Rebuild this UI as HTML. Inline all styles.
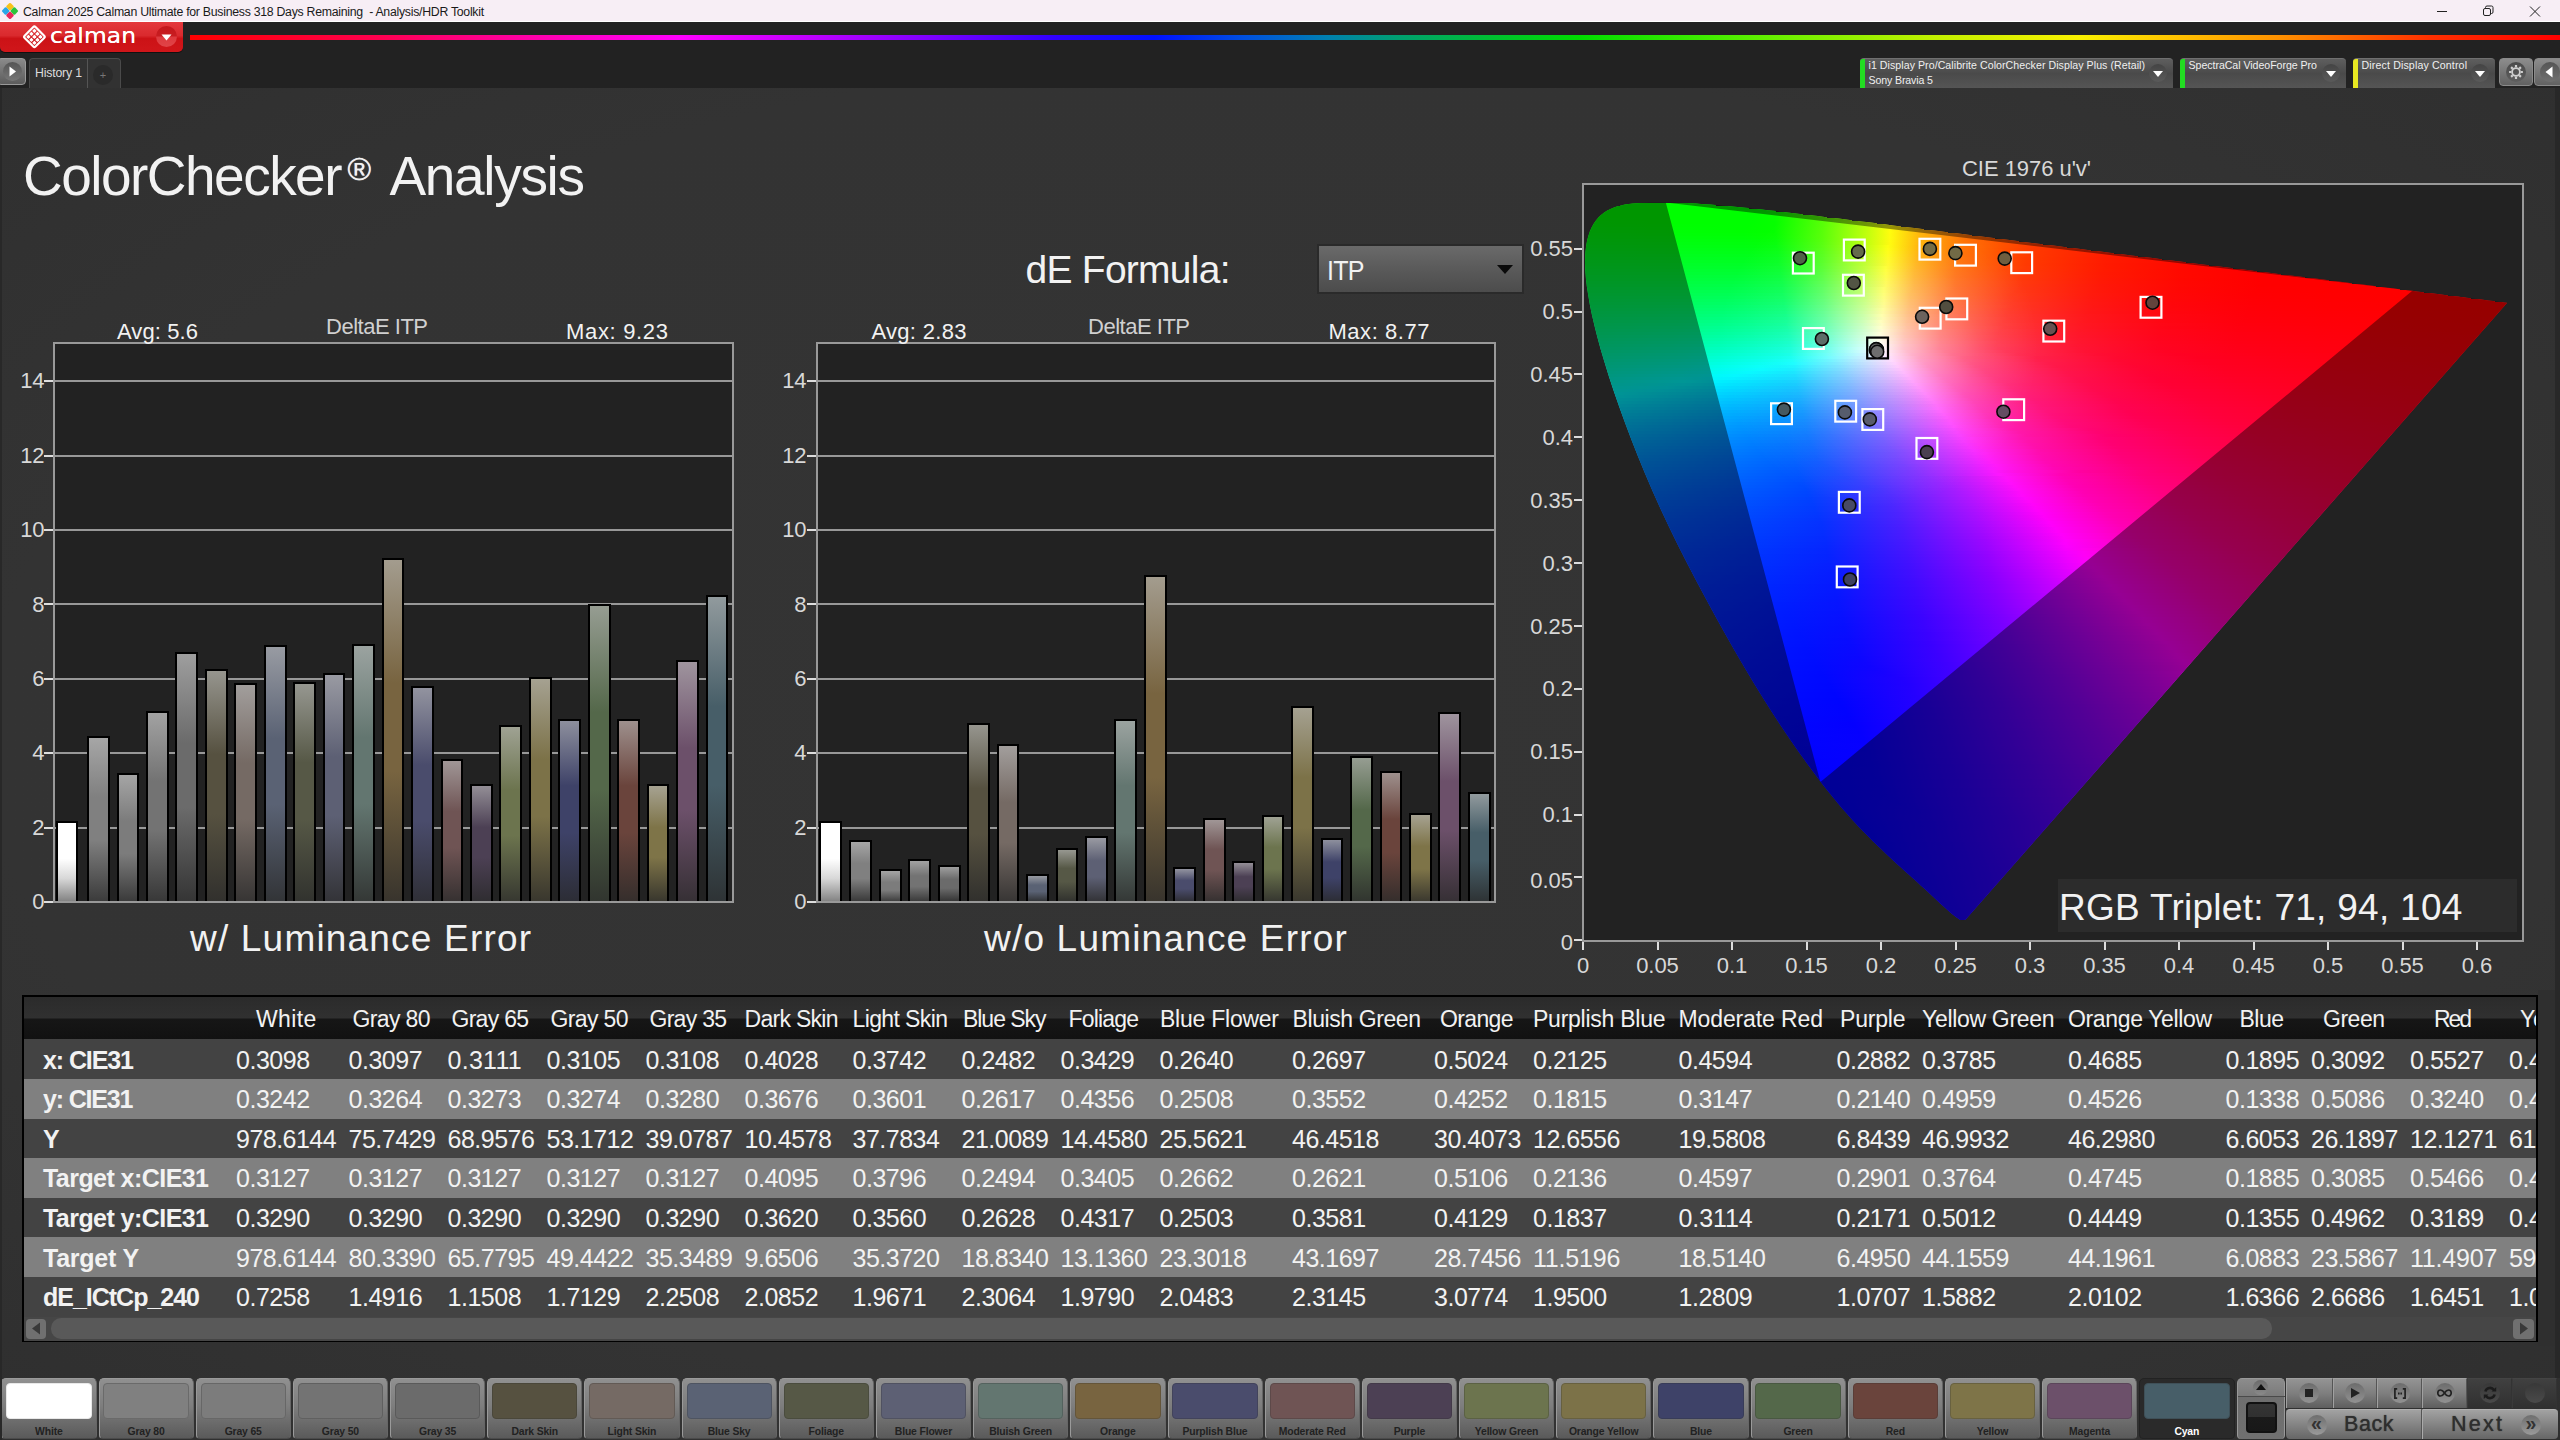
<!DOCTYPE html>
<html><head><meta charset="utf-8"><title>Calman - ColorChecker Analysis</title>
<style>
html,body{margin:0;padding:0;}
body{width:2560px;height:1440px;overflow:hidden;background:#333;position:relative;font-family:"Liberation Sans",sans-serif;}
.t{position:absolute;white-space:pre;}
.a{position:absolute;}
.cie{position:absolute;left:1584px;top:185px;width:938px;height:755px;clip-path:polygon(381.7px 734.6px,380.2px 735.1px,378.2px 735.3px,376.3px 734.9px,374.8px 734.1px,373.4px 733.1px,371.8px 732.0px,370.0px 730.5px,368.0px 728.9px,366.9px 727.9px,365.7px 726.9px,364.4px 725.7px,362.9px 724.5px,361.5px 723.2px,359.9px 721.8px,358.2px 720.3px,356.5px 718.7px,354.7px 717.0px,352.8px 715.2px,350.9px 713.4px,348.8px 711.4px,346.6px 709.4px,344.3px 707.3px,341.9px 705.1px,339.4px 702.8px,336.7px 700.4px,333.9px 697.8px,330.9px 695.1px,327.7px 692.3px,324.4px 689.3px,321.0px 686.2px,317.5px 683.0px,313.8px 679.7px,310.0px 676.2px,306.0px 672.5px,301.9px 668.7px,297.6px 664.6px,293.1px 660.3px,288.4px 655.7px,283.6px 650.8px,278.6px 645.7px,273.5px 640.4px,268.2px 634.7px,262.7px 628.6px,256.9px 621.9px,250.8px 614.6px,244.2px 606.4px,237.1px 597.4px,229.7px 587.5px,221.8px 576.8px,213.7px 565.4px,205.4px 553.4px,196.8px 540.7px,188.0px 527.2px,179.0px 513.1px,169.9px 498.2px,160.5px 482.6px,151.0px 466.3px,141.5px 449.5px,131.9px 432.3px,122.4px 414.7px,112.9px 396.9px,103.5px 378.9px,94.2px 360.8px,85.3px 342.5px,76.7px 324.3px,68.6px 306.3px,61.0px 288.6px,53.9px 271.2px,47.2px 254.2px,40.9px 237.6px,35.1px 221.6px,29.8px 206.3px,24.9px 191.6px,20.6px 177.6px,16.7px 164.5px,13.3px 152.1px,10.4px 140.5px,7.9px 129.7px,5.8px 119.6px,4.2px 110.1px,2.8px 101.3px,1.9px 93.2px,1.3px 85.7px,1.0px 78.7px,1.1px 72.3px,1.5px 66.3px,2.2px 60.6px,3.1px 55.5px,4.4px 50.7px,5.9px 46.3px,7.7px 42.3px,9.8px 38.6px,12.1px 35.3px,14.6px 32.3px,17.3px 29.8px,20.2px 27.5px,23.3px 25.6px,26.5px 23.9px,29.9px 22.5px,33.4px 21.3px,37.1px 20.4px,40.8px 19.6px,44.7px 19.1px,48.6px 18.6px,52.6px 18.2px,56.7px 17.9px,60.9px 17.7px,65.1px 17.6px,69.4px 17.5px,73.6px 17.5px,77.8px 17.5px,82.0px 17.5px,86.3px 17.5px,90.5px 17.6px,94.8px 17.7px,99.2px 17.9px,103.6px 18.1px,108.0px 18.3px,112.5px 18.6px,117.1px 18.9px,121.7px 19.2px,126.4px 19.6px,131.2px 19.9px,136.0px 20.3px,140.9px 20.8px,145.9px 21.2px,151.0px 21.7px,156.2px 22.2px,161.5px 22.8px,166.9px 23.3px,172.4px 23.9px,178.0px 24.5px,183.7px 25.2px,189.6px 25.8px,195.5px 26.5px,201.6px 27.2px,207.8px 27.9px,214.1px 28.7px,220.6px 29.5px,227.1px 30.2px,233.9px 31.1px,240.7px 31.9px,247.7px 32.7px,254.8px 33.6px,262.1px 34.5px,269.6px 35.4px,277.2px 36.4px,284.9px 37.3px,292.8px 38.3px,300.8px 39.3px,309.0px 40.4px,317.4px 41.4px,325.9px 42.5px,334.6px 43.6px,343.4px 44.7px,352.4px 45.8px,361.6px 47.0px,370.9px 48.1px,380.3px 49.3px,389.9px 50.6px,399.6px 51.8px,409.5px 53.0px,419.5px 54.3px,429.7px 55.6px,439.9px 56.9px,450.3px 58.2px,460.8px 59.5px,471.4px 60.8px,482.1px 62.2px,492.9px 63.5px,503.8px 64.9px,514.7px 66.3px,525.7px 67.7px,536.6px 69.1px,547.4px 70.4px,558.2px 71.8px,568.8px 73.1px,579.3px 74.4px,589.8px 75.8px,600.2px 77.1px,610.7px 78.4px,621.1px 79.7px,631.4px 81.0px,641.6px 82.3px,651.6px 83.6px,661.3px 84.8px,670.8px 86.0px,680.1px 87.1px,689.1px 88.3px,698.0px 89.4px,706.7px 90.5px,715.1px 91.5px,723.3px 92.6px,731.3px 93.6px,739.1px 94.6px,746.6px 95.5px,753.8px 96.4px,760.8px 97.3px,767.6px 98.2px,774.1px 99.0px,780.4px 99.8px,786.5px 100.5px,792.4px 101.3px,798.0px 102.0px,803.5px 102.7px,808.8px 103.3px,813.8px 104.0px,818.7px 104.6px,823.5px 105.2px,828.2px 105.8px,832.7px 106.4px,837.1px 106.9px,841.4px 107.5px,845.6px 108.0px,849.6px 108.5px,853.5px 109.0px,857.2px 109.5px,860.9px 109.9px,864.3px 110.4px,867.7px 110.8px,870.9px 111.2px,874.0px 111.6px,877.0px 112.0px,879.9px 112.3px,882.5px 112.7px,885.0px 113.0px,887.4px 113.3px,889.6px 113.6px,891.7px 113.8px,893.7px 114.1px,895.6px 114.3px,897.5px 114.5px,900.9px 115.0px,904.0px 115.4px,906.7px 115.7px,909.1px 116.0px,911.1px 116.3px,913.5px 116.6px,915.7px 116.8px,917.7px 117.1px,919.9px 117.4px,922.2px 117.7px,923.2px 117.8px);}
.cie i{position:absolute;height:3px;display:block}

</style></head><body>
<div class="a" style="left:0;top:88px;width:2560px;height:1352px;background:radial-gradient(ellipse 72% 72% at 50% 48%,#343434 0%,#333 70%,#2f2f2f 100%);"></div>
<div class="a" style="left:0;top:0;width:2560px;height:22px;background:#f7eef5;border-bottom:1px solid #fff;box-sizing:border-box"></div>
<svg class="a" style="left:-0.5px;top:2.3px" width="20" height="18" viewBox="0 0 20 18">
<g transform="translate(10,9)">
<rect x="-3" y="-3" width="6" height="6" rx="1.2" transform="translate(0,-4.3) rotate(45)" fill="#f7c21a"/>
<rect x="-3" y="-3" width="6" height="6" rx="1.2" transform="translate(-4.3,0) rotate(45)" fill="#2aa7e8"/>
<rect x="-3" y="-3" width="6" height="6" rx="1.2" transform="translate(4.3,0) rotate(45)" fill="#2bc43a"/>
<rect x="-3" y="-3" width="6" height="6" rx="1.2" transform="translate(0,4.3) rotate(45)" fill="#e8265a"/>
</g></svg>
<svg class="a" style="left:2420px;top:0" width="140" height="22" viewBox="0 0 140 22" fill="none" stroke="#222" stroke-width="1">
<path d="M17 11.5h10"/>
<rect x="63.5" y="8.5" width="7" height="7" rx="1.5"/><path d="M65.5 8.5v-1a1.5 1.5 0 0 1 1.5 -1.5h4.5a1.5 1.5 0 0 1 1.5 1.5v4.5a1.5 1.5 0 0 1 -1.5 1.5h-1"/>
<path d="M110 6.5l10 10M120 6.5l-10 10"/></svg>
<div class="a" style="left:0;top:22px;width:2560px;height:66px;background:#222;"></div>
<div class="a" style="left:190px;top:35px;width:2370px;height:5px;background:linear-gradient(90deg,#f00 0%,#ff0050 8%,#ff00c0 16%,#f0f 20.7%,#c000ff 26%,#8000ff 31%,#3000ff 36.5%,#0010ff 40.7%,#0050e0 44.5%,#0080b0 48%,#00a070 51%,#00c030 55%,#00dc00 58.6%,#40ec00 64%,#70f000 67.5%,#c0f000 73.5%,#f8f000 79.7%,#ffc000 84%,#ff9000 88.2%,#ff3000 94.5%,#f00 100%);"></div>
<div class="a" style="left:0;top:22.4px;width:183px;height:29.6px;border-radius:0 0 5px 5px;background:linear-gradient(#e4383c 0%,#da2a2e 45%,#cc1216 55%,#d0161a 100%);box-shadow:0 1px 0 #111;"></div>
<svg class="a" style="left:20px;top:24px" width="30" height="26" viewBox="0 0 30 26"><g transform="translate(14.4,12.8) rotate(45)"><rect x="-7.7" y="-7.7" width="15.4" height="15.4" rx="1.6" fill="none" stroke="#fff" stroke-width="2.2"/><rect x="-5.80" y="-5.80" width="3.1" height="3.1" rx="0.5" fill="#fff"/><rect x="-5.80" y="-1.55" width="3.1" height="3.1" rx="0.5" fill="#fff"/><rect x="-5.80" y="2.70" width="3.1" height="3.1" rx="0.5" fill="#fff"/><rect x="-1.55" y="-5.80" width="3.1" height="3.1" rx="0.5" fill="#fff"/><rect x="-1.55" y="-1.55" width="3.1" height="3.1" rx="0.5" fill="#fff"/><rect x="-1.55" y="2.70" width="3.1" height="3.1" rx="0.5" fill="#fff"/><rect x="2.70" y="-5.80" width="3.1" height="3.1" rx="0.5" fill="#fff"/><rect x="2.70" y="-1.55" width="3.1" height="3.1" rx="0.5" fill="#fff"/><rect x="2.70" y="2.70" width="3.1" height="3.1" rx="0.5" fill="#fff"/></g></svg>
<div class="a" style="left:156px;top:26px;width:21px;height:21px;border-radius:50%;background:linear-gradient(#c4181c 0%,#c81c20 48%,#de3a3e 52%,#e04448 100%);"></div>
<svg class="a" style="left:161px;top:34px" width="11" height="7"><path d="M0.5 0.5h10l-5 6z" fill="#fff"/></svg>
<div class="a" style="left:-3px;top:58px;width:29px;height:27px;border-radius:4px;background:linear-gradient(#8a8a8a,#5c5c5c);border:1px solid #999;box-sizing:border-box"></div>
<div class="a" style="left:3px;top:62px;width:19px;height:19px;border-radius:50%;background:linear-gradient(#555,#777);"></div>
<svg class="a" style="left:9px;top:66px" width="8" height="11"><path d="M0.5 0.5v10l6.5-5z" fill="#fff"/></svg>
<div class="a" style="left:29px;top:58px;width:92px;height:30px;border-radius:4px 4px 0 0;background:#323232;border:1px solid #4a4a4a;border-bottom:none;box-sizing:border-box"></div>
<div class="a" style="left:87px;top:59px;width:1px;height:29px;background:#555"></div>
<div class="a" style="left:93px;top:65px;width:20px;height:20px;border-radius:50%;background:#2a2a2a;"></div>
<div class="a" style="left:1860px;top:58px;width:313px;height:30px;border-radius:4px 4px 0 0;background:linear-gradient(#5e5e5e,#4a4a4a 50%,#555 100%);border-top:1px solid #707070;box-sizing:border-box"></div>
<div class="a" style="left:1860px;top:59px;width:5px;height:29px;background:#22dd22;border-radius:3px 0 0 0"></div>
<div class="a" style="left:2149px;top:64px;width:18px;height:18px;border-radius:50%;background:linear-gradient(#444,#5a5a5a);"></div>
<svg class="a" style="left:2153px;top:71px" width="10" height="6"><path d="M0 0h10l-5 6z" fill="#fff"/></svg>
<div class="a" style="left:2180px;top:58px;width:166px;height:30px;border-radius:4px 4px 0 0;background:linear-gradient(#5e5e5e,#4a4a4a 50%,#555 100%);border-top:1px solid #707070;box-sizing:border-box"></div>
<div class="a" style="left:2180px;top:59px;width:5px;height:29px;background:#22dd22;border-radius:3px 0 0 0"></div>
<div class="a" style="left:2322px;top:64px;width:18px;height:18px;border-radius:50%;background:linear-gradient(#444,#5a5a5a);"></div>
<svg class="a" style="left:2326px;top:71px" width="10" height="6"><path d="M0 0h10l-5 6z" fill="#fff"/></svg>
<div class="a" style="left:2353px;top:58px;width:142px;height:30px;border-radius:4px 4px 0 0;background:linear-gradient(#5e5e5e,#4a4a4a 50%,#555 100%);border-top:1px solid #707070;box-sizing:border-box"></div>
<div class="a" style="left:2353px;top:59px;width:5px;height:29px;background:#e8e822;border-radius:3px 0 0 0"></div>
<div class="a" style="left:2471px;top:64px;width:18px;height:18px;border-radius:50%;background:linear-gradient(#444,#5a5a5a);"></div>
<svg class="a" style="left:2475px;top:71px" width="10" height="6"><path d="M0 0h10l-5 6z" fill="#fff"/></svg>
<div class="a" style="left:2499px;top:58px;width:34px;height:28px;border-radius:4px;background:linear-gradient(#8c8c8c,#626262);border:1px solid #8a8a8a;box-sizing:border-box"></div>
<div class="a" style="left:2506px;top:62px;width:20px;height:20px;border-radius:50%;background:linear-gradient(#4a4a4a,#5e5e5e);"></div>
<svg class="a" style="left:2507px;top:63px" width="18" height="18" viewBox="-9 -9 18 18"><g fill="none" stroke="#cfcfcf"><circle r="3.9" stroke-width="1.8"/><g stroke-width="2.2"><path d="M0 -6.9v2.2M0 6.9v-2.2M-6.9 0h2.2M6.9 0h-2.2M-4.9 -4.9l1.6 1.6M4.9 4.9l-1.6 -1.6M-4.9 4.9l1.6 -1.6M4.9 -4.9l-1.6 1.6"/></g></g></svg>
<div class="a" style="left:2534px;top:58px;width:30px;height:28px;border-radius:4px;background:linear-gradient(#8c8c8c,#626262);border:1px solid #8a8a8a;box-sizing:border-box"></div>
<div class="a" style="left:2540px;top:62px;width:20px;height:20px;border-radius:50%;background:linear-gradient(#555,#707070);"></div>
<svg class="a" style="left:2545px;top:66px" width="8" height="12"><path d="M7.5 0.5v11l-7-5.5z" fill="#fff"/></svg>
<div class="a" style="left:1317.3px;top:243.6px;width:207px;height:50px;box-sizing:border-box;border:2px solid #2a2a2a;background:linear-gradient(#6a6a6a,#5a5a5a 50%,#4c4c4c);"></div>
<svg class="a" style="left:1497px;top:265px" width="16" height="9"><path d="M0 0h16l-8 9z" fill="#0a0a0a"/></svg>
<div class="a" style="left:53px;top:342px;width:681px;height:561px;background:#222;"></div>
<div class="a" style="left:55px;top:826.6px;width:677px;height:2px;background:#989898;"></div><div class="a" style="left:55px;top:752.2px;width:677px;height:2px;background:#989898;"></div><div class="a" style="left:55px;top:677.8px;width:677px;height:2px;background:#989898;"></div><div class="a" style="left:55px;top:603.4px;width:677px;height:2px;background:#989898;"></div><div class="a" style="left:55px;top:529.0px;width:677px;height:2px;background:#989898;"></div><div class="a" style="left:55px;top:454.6px;width:677px;height:2px;background:#989898;"></div><div class="a" style="left:55px;top:380.2px;width:677px;height:2px;background:#989898;"></div>
<div class="a" style="left:55.60px;top:821.0px;width:22.8px;height:80.5px;box-sizing:border-box;border:2px solid #000;border-bottom:none;background:linear-gradient(#fff 0%,#fff 45%,#d8d8d8 70%,#808080 100%);"></div><div class="a" style="left:87.10px;top:735.5px;width:22.8px;height:166.0px;box-sizing:border-box;border:2px solid #000;border-bottom:none;background:linear-gradient(#a6a6a6 0%,#808080 36%,#808080 62%,#3a3a3a 100%);"></div><div class="a" style="left:116.55px;top:773.0px;width:22.8px;height:128.5px;box-sizing:border-box;border:2px solid #000;border-bottom:none;background:linear-gradient(#a5a5a5 0%,#7c7c7c 36%,#7c7c7c 62%,#393939 100%);"></div><div class="a" style="left:146.00px;top:710.5px;width:22.8px;height:191.0px;box-sizing:border-box;border:2px solid #000;border-bottom:none;background:linear-gradient(#a2a2a2 0%,#737373 36%,#737373 62%,#373737 100%);"></div><div class="a" style="left:175.45px;top:652.1px;width:22.8px;height:249.4px;box-sizing:border-box;border:2px solid #000;border-bottom:none;background:linear-gradient(#9e9e9e 0%,#6b6b6b 36%,#6b6b6b 62%,#353535 100%);"></div><div class="a" style="left:204.90px;top:668.5px;width:22.8px;height:233.0px;box-sizing:border-box;border:2px solid #000;border-bottom:none;background:linear-gradient(#96958e 0%,#565140 36%,#565140 62%,#31302d 100%);"></div><div class="a" style="left:234.35px;top:683.4px;width:22.8px;height:218.1px;box-sizing:border-box;border:2px solid #000;border-bottom:none;background:linear-gradient(#a29e9c 0%,#756a64 36%,#756a64 62%,#373534 100%);"></div><div class="a" style="left:263.80px;top:645.4px;width:22.8px;height:256.1px;box-sizing:border-box;border:2px solid #000;border-bottom:none;background:linear-gradient(#989ba2 0%,#5a6274 36%,#5a6274 62%,#323437 100%);"></div><div class="a" style="left:293.25px;top:681.5px;width:22.8px;height:220.0px;box-sizing:border-box;border:2px solid #000;border-bottom:none;background:linear-gradient(#969790 0%,#565846 36%,#565846 62%,#31322e 100%);"></div><div class="a" style="left:322.70px;top:673.0px;width:22.8px;height:228.5px;box-sizing:border-box;border:2px solid #000;border-bottom:none;background:linear-gradient(#999aa2 0%,#5d6074 36%,#5d6074 62%,#333337 100%);"></div><div class="a" style="left:352.15px;top:643.6px;width:22.8px;height:257.9px;box-sizing:border-box;border:2px solid #000;border-bottom:none;background:linear-gradient(#9ba3a0 0%,#637670 36%,#637670 62%,#343836 100%);"></div><div class="a" style="left:381.60px;top:557.6px;width:22.8px;height:343.9px;box-sizing:border-box;border:2px solid #000;border-bottom:none;background:linear-gradient(#a39c8e 0%,#786440 36%,#786440 62%,#38342d 100%);"></div><div class="a" style="left:411.05px;top:686.0px;width:22.8px;height:215.5px;box-sizing:border-box;border:2px solid #000;border-bottom:none;background:linear-gradient(#92939f 0%,#4a4c6c 36%,#4a4c6c 62%,#2f2f36 100%);"></div><div class="a" style="left:440.50px;top:758.9px;width:22.8px;height:142.6px;box-sizing:border-box;border:2px solid #000;border-bottom:none;background:linear-gradient(#a09696 0%,#6f5454 36%,#6f5454 62%,#363131 100%);"></div><div class="a" style="left:469.95px;top:783.8px;width:22.8px;height:117.7px;box-sizing:border-box;border:2px solid #000;border-bottom:none;background:linear-gradient(#938e96 0%,#4c4054 36%,#4c4054 62%,#2f2d31 100%);"></div><div class="a" style="left:499.40px;top:725.0px;width:22.8px;height:176.5px;box-sizing:border-box;border:2px solid #000;border-bottom:none;background:linear-gradient(#9fa293 0%,#6c744e 36%,#6c744e 62%,#363730 100%);"></div><div class="a" style="left:528.85px;top:676.7px;width:22.8px;height:224.8px;box-sizing:border-box;border:2px solid #000;border-bottom:none;background:linear-gradient(#a5a191 0%,#7c7248 36%,#7c7248 62%,#39372e 100%);"></div><div class="a" style="left:558.30px;top:719.1px;width:22.8px;height:182.4px;box-sizing:border-box;border:2px solid #000;border-bottom:none;background:linear-gradient(#8d8f9d 0%,#3e4268 36%,#3e4268 62%,#2c2d35 100%);"></div><div class="a" style="left:587.75px;top:603.8px;width:22.8px;height:297.7px;box-sizing:border-box;border:2px solid #000;border-bottom:none;background:linear-gradient(#969d92 0%,#54684a 36%,#54684a 62%,#31352f 100%);"></div><div class="a" style="left:617.20px;top:719.1px;width:22.8px;height:182.4px;box-sizing:border-box;border:2px solid #000;border-bottom:none;background:linear-gradient(#9e908d 0%,#6a443c 36%,#6a443c 62%,#352e2c 100%);"></div><div class="a" style="left:646.65px;top:783.8px;width:22.8px;height:117.7px;box-sizing:border-box;border:2px solid #000;border-bottom:none;background:linear-gradient(#a6a291 0%,#7e7448 36%,#7e7448 62%,#39372e 100%);"></div><div class="a" style="left:676.10px;top:660.3px;width:22.8px;height:241.2px;box-sizing:border-box;border:2px solid #000;border-bottom:none;background:linear-gradient(#9f949e 0%,#6c506a 36%,#6c506a 62%,#363035 100%);"></div><div class="a" style="left:705.55px;top:595.2px;width:22.8px;height:306.3px;box-sizing:border-box;border:2px solid #000;border-bottom:none;background:linear-gradient(#919a9d 0%,#475e68 36%,#475e68 62%,#2e3335 100%);"></div>
<div class="a" style="left:53px;top:342px;width:681px;height:561px;box-sizing:border-box;border:2px solid #999;"></div>
<div class="a" style="left:44px;top:901.0px;width:9px;height:2px;background:#ddd;"></div><div class="a" style="left:44px;top:826.6px;width:9px;height:2px;background:#ddd;"></div><div class="a" style="left:44px;top:752.2px;width:9px;height:2px;background:#ddd;"></div><div class="a" style="left:44px;top:677.8px;width:9px;height:2px;background:#ddd;"></div><div class="a" style="left:44px;top:603.4px;width:9px;height:2px;background:#ddd;"></div><div class="a" style="left:44px;top:529.0px;width:9px;height:2px;background:#ddd;"></div><div class="a" style="left:44px;top:454.6px;width:9px;height:2px;background:#ddd;"></div><div class="a" style="left:44px;top:380.2px;width:9px;height:2px;background:#ddd;"></div>
<div class="a" style="left:816px;top:342px;width:680px;height:561px;background:#222;"></div>
<div class="a" style="left:818px;top:826.6px;width:676px;height:2px;background:#989898;"></div><div class="a" style="left:818px;top:752.2px;width:676px;height:2px;background:#989898;"></div><div class="a" style="left:818px;top:677.8px;width:676px;height:2px;background:#989898;"></div><div class="a" style="left:818px;top:603.4px;width:676px;height:2px;background:#989898;"></div><div class="a" style="left:818px;top:529.0px;width:676px;height:2px;background:#989898;"></div><div class="a" style="left:818px;top:454.6px;width:676px;height:2px;background:#989898;"></div><div class="a" style="left:818px;top:380.2px;width:676px;height:2px;background:#989898;"></div>
<div class="a" style="left:818.75px;top:821.0px;width:22.8px;height:80.5px;box-sizing:border-box;border:2px solid #000;border-bottom:none;background:linear-gradient(#fff 0%,#fff 45%,#d8d8d8 70%,#808080 100%);"></div><div class="a" style="left:849.40px;top:840.4px;width:22.8px;height:61.1px;box-sizing:border-box;border:2px solid #000;border-bottom:none;background:linear-gradient(#a6a6a6 0%,#808080 36%,#808080 62%,#3a3a3a 100%);"></div><div class="a" style="left:878.85px;top:869.0px;width:22.8px;height:32.5px;box-sizing:border-box;border:2px solid #000;border-bottom:none;background:linear-gradient(#a5a5a5 0%,#7c7c7c 36%,#7c7c7c 62%,#393939 100%);"></div><div class="a" style="left:908.30px;top:859.0px;width:22.8px;height:42.5px;box-sizing:border-box;border:2px solid #000;border-bottom:none;background:linear-gradient(#a2a2a2 0%,#737373 36%,#737373 62%,#373737 100%);"></div><div class="a" style="left:937.75px;top:864.9px;width:22.8px;height:36.6px;box-sizing:border-box;border:2px solid #000;border-bottom:none;background:linear-gradient(#9e9e9e 0%,#6b6b6b 36%,#6b6b6b 62%,#353535 100%);"></div><div class="a" style="left:967.20px;top:722.8px;width:22.8px;height:178.7px;box-sizing:border-box;border:2px solid #000;border-bottom:none;background:linear-gradient(#96958e 0%,#565140 36%,#565140 62%,#31302d 100%);"></div><div class="a" style="left:996.65px;top:744.0px;width:22.8px;height:157.5px;box-sizing:border-box;border:2px solid #000;border-bottom:none;background:linear-gradient(#a29e9c 0%,#756a64 36%,#756a64 62%,#373534 100%);"></div><div class="a" style="left:1026.10px;top:874.2px;width:22.8px;height:27.3px;box-sizing:border-box;border:2px solid #000;border-bottom:none;background:linear-gradient(#989ba2 0%,#5a6274 36%,#5a6274 62%,#323437 100%);"></div><div class="a" style="left:1055.55px;top:848.2px;width:22.8px;height:53.3px;box-sizing:border-box;border:2px solid #000;border-bottom:none;background:linear-gradient(#969790 0%,#565846 36%,#565846 62%,#31322e 100%);"></div><div class="a" style="left:1085.00px;top:835.9px;width:22.8px;height:65.6px;box-sizing:border-box;border:2px solid #000;border-bottom:none;background:linear-gradient(#999aa2 0%,#5d6074 36%,#5d6074 62%,#333337 100%);"></div><div class="a" style="left:1114.45px;top:718.7px;width:22.8px;height:182.8px;box-sizing:border-box;border:2px solid #000;border-bottom:none;background:linear-gradient(#9ba3a0 0%,#637670 36%,#637670 62%,#343836 100%);"></div><div class="a" style="left:1143.90px;top:574.8px;width:22.8px;height:326.7px;box-sizing:border-box;border:2px solid #000;border-bottom:none;background:linear-gradient(#a39c8e 0%,#786440 36%,#786440 62%,#38342d 100%);"></div><div class="a" style="left:1173.35px;top:867.1px;width:22.8px;height:34.4px;box-sizing:border-box;border:2px solid #000;border-bottom:none;background:linear-gradient(#92939f 0%,#4a4c6c 36%,#4a4c6c 62%,#2f2f36 100%);"></div><div class="a" style="left:1202.80px;top:818.4px;width:22.8px;height:83.1px;box-sizing:border-box;border:2px solid #000;border-bottom:none;background:linear-gradient(#a09696 0%,#6f5454 36%,#6f5454 62%,#363131 100%);"></div><div class="a" style="left:1232.25px;top:860.8px;width:22.8px;height:40.7px;box-sizing:border-box;border:2px solid #000;border-bottom:none;background:linear-gradient(#938e96 0%,#4c4054 36%,#4c4054 62%,#2f2d31 100%);"></div><div class="a" style="left:1261.70px;top:815.1px;width:22.8px;height:86.4px;box-sizing:border-box;border:2px solid #000;border-bottom:none;background:linear-gradient(#9fa293 0%,#6c744e 36%,#6c744e 62%,#363730 100%);"></div><div class="a" style="left:1291.15px;top:705.7px;width:22.8px;height:195.8px;box-sizing:border-box;border:2px solid #000;border-bottom:none;background:linear-gradient(#a5a191 0%,#7c7248 36%,#7c7248 62%,#39372e 100%);"></div><div class="a" style="left:1320.60px;top:838.1px;width:22.8px;height:63.4px;box-sizing:border-box;border:2px solid #000;border-bottom:none;background:linear-gradient(#8d8f9d 0%,#3e4268 36%,#3e4268 62%,#2c2d35 100%);"></div><div class="a" style="left:1350.05px;top:756.3px;width:22.8px;height:145.2px;box-sizing:border-box;border:2px solid #000;border-bottom:none;background:linear-gradient(#969d92 0%,#54684a 36%,#54684a 62%,#31352f 100%);"></div><div class="a" style="left:1379.50px;top:770.8px;width:22.8px;height:130.7px;box-sizing:border-box;border:2px solid #000;border-bottom:none;background:linear-gradient(#9e908d 0%,#6a443c 36%,#6a443c 62%,#352e2c 100%);"></div><div class="a" style="left:1408.95px;top:812.5px;width:22.8px;height:89.0px;box-sizing:border-box;border:2px solid #000;border-bottom:none;background:linear-gradient(#a6a291 0%,#7e7448 36%,#7e7448 62%,#39372e 100%);"></div><div class="a" style="left:1438.40px;top:712.4px;width:22.8px;height:189.1px;box-sizing:border-box;border:2px solid #000;border-bottom:none;background:linear-gradient(#9f949e 0%,#6c506a 36%,#6c506a 62%,#363035 100%);"></div><div class="a" style="left:1467.85px;top:791.6px;width:22.8px;height:109.9px;box-sizing:border-box;border:2px solid #000;border-bottom:none;background:linear-gradient(#919a9d 0%,#475e68 36%,#475e68 62%,#2e3335 100%);"></div>
<div class="a" style="left:816px;top:342px;width:680px;height:561px;box-sizing:border-box;border:2px solid #999;"></div>
<div class="a" style="left:807px;top:901.0px;width:9px;height:2px;background:#ddd;"></div><div class="a" style="left:807px;top:826.6px;width:9px;height:2px;background:#ddd;"></div><div class="a" style="left:807px;top:752.2px;width:9px;height:2px;background:#ddd;"></div><div class="a" style="left:807px;top:677.8px;width:9px;height:2px;background:#ddd;"></div><div class="a" style="left:807px;top:603.4px;width:9px;height:2px;background:#ddd;"></div><div class="a" style="left:807px;top:529.0px;width:9px;height:2px;background:#ddd;"></div><div class="a" style="left:807px;top:454.6px;width:9px;height:2px;background:#ddd;"></div><div class="a" style="left:807px;top:380.2px;width:9px;height:2px;background:#ddd;"></div>
<div class="a" style="left:1582px;top:183px;width:942px;height:759px;background:#222;"></div>
<div class="cie"><i style="left:36px;top:18px;width:96px;background:linear-gradient(90deg,#00ff00 0px,#00ff00 80px,#00ff00 96px)"></i><i style="left:24px;top:21px;width:141px;background:linear-gradient(90deg,#00ff00 0px,#00ff00 80px,#00ff00 140px)"></i><i style="left:17px;top:24px;width:175px;background:linear-gradient(90deg,#00ff00 0px,#00ff00 80px,#00ff00 160px,#0cff00 176px)"></i><i style="left:13px;top:27px;width:206px;background:linear-gradient(90deg,#00ff00 0px,#00ff00 80px,#00ff00 160px,#0bff00 180px,#30ff00 206px)"></i><i style="left:9px;top:30px;width:234px;background:linear-gradient(90deg,#00ff01 0px,#00ff00 80px,#00ff00 160px,#08ff00 182px,#55ff00 230px,#5dff00 234px)"></i><i style="left:7px;top:33px;width:261px;background:linear-gradient(90deg,#00ff03 0px,#00ff00 80px,#00ff00 160px,#07ff00 184px,#54ff00 232px,#96ff00 262px)"></i><i style="left:5px;top:36px;width:288px;background:linear-gradient(90deg,#00ff05 0px,#00ff00 80px,#00ff00 160px,#06ff00 186px,#53ff00 234px,#c4ff00 282px,#d5ff00 288px)"></i><i style="left:3px;top:39px;width:314px;background:linear-gradient(90deg,#00ff07 0px,#00ff02 80px,#00ff00 160px,#06ff00 188px,#53ff00 236px,#c5ff00 284px,#fffd00 304px,#ffe000 314px)"></i><i style="left:1px;top:42px;width:339px;background:linear-gradient(90deg,#00ff0a 0px,#00ff04 80px,#00ff00 160px,#06ff00 190px,#54ff00 238px,#c7ff00 286px,#fffb00 306px,#ffad00 338px)"></i><i style="left:0px;top:45px;width:364px;background:linear-gradient(90deg,#00ff0c 0px,#00ff07 80px,#00ff01 160px,#04ff00 190px,#4dff00 236px,#bfff00 284px,#fffd00 306px,#ffb300 336px,#ff8600 364px)"></i><i style="left:0px;top:48px;width:388px;background:linear-gradient(90deg,#00ff0f 0px,#00ff09 80px,#00ff03 160px,#06ff01 192px,#51ff00 238px,#c5ff00 286px,#fffc00 306px,#ffb200 336px,#ff6f00 382px,#ff6900 388px)"></i><i style="left:0px;top:51px;width:411px;background:linear-gradient(90deg,#00ff11 0px,#00ff0c 80px,#00ff06 160px,#06ff03 192px,#51ff00 238px,#bfff00 284px,#fffc00 306px,#ffb100 336px,#ff6f00 382px,#ff5400 412px)"></i><i style="left:0px;top:54px;width:435px;background:linear-gradient(90deg,#00ff14 0px,#00ff0f 80px,#00ff09 160px,#05ff06 192px,#50ff02 238px,#c0ff00 284px,#fffb00 306px,#ffb000 336px,#ff6e00 382px,#ff4300 436px)"></i><i style="left:0px;top:57px;width:459px;background:linear-gradient(90deg,#00ff17 0px,#00ff12 80px,#00ff0c 160px,#05ff09 192px,#50ff05 238px,#c0ff00 284px,#fffa00 306px,#ffaf00 336px,#ff6d00 382px,#ff3800 454px,#ff3600 458px)"></i><i style="left:0px;top:60px;width:483px;background:linear-gradient(90deg,#00ff1a 0px,#00ff15 80px,#00ff0f 160px,#04ff0d 192px,#4cff08 236px,#bbff04 282px,#feff01 304px,#ffb200 334px,#ff7100 378px,#ff3b00 448px,#ff2b00 482px)"></i><i style="left:0px;top:63px;width:507px;background:linear-gradient(90deg,#00ff1d 0px,#00ff18 80px,#00ff13 160px,#06ff10 194px,#54ff0c 240px,#c7ff07 286px,#ffff05 304px,#ffb101 334px,#ff7000 378px,#ff3a00 448px,#ff2200 506px)"></i><i style="left:0px;top:66px;width:530px;background:linear-gradient(90deg,#00ff20 0px,#00ff1b 80px,#00ff16 160px,#06ff14 194px,#4fff10 238px,#c1ff0b 284px,#fffe09 304px,#ffb004 334px,#ff6f00 378px,#ff3900 448px,#ff1b00 528px,#ff1a00 530px)"></i><i style="left:0px;top:69px;width:554px;background:linear-gradient(90deg,#00ff23 0px,#00ff1f 80px,#00ff1a 160px,#05ff18 194px,#4fff14 238px,#c2ff10 284px,#fffd0d 304px,#ffaf07 334px,#ff6e02 378px,#ff3900 448px,#ff1a00 528px,#ff1400 554px)"></i><i style="left:0px;top:72px;width:578px;background:linear-gradient(90deg,#00ff26 0px,#00ff22 80px,#00ff1e 160px,#05ff1c 194px,#4fff18 238px,#c2ff14 284px,#fffc12 304px,#ffb30a 332px,#ff7204 374px,#ff3b00 442px,#ff1b00 522px,#ff0e00 578px)"></i><i style="left:0px;top:75px;width:602px;background:linear-gradient(90deg,#00ff29 0px,#00ff26 80px,#00ff22 160px,#04ff20 194px,#4eff1d 238px,#bdff19 282px,#fffb17 304px,#ffb20e 332px,#ff7107 374px,#ff3b01 442px,#ff1b00 522px,#ff0a00 602px)"></i><i style="left:0px;top:78px;width:625px;background:linear-gradient(90deg,#00ff2c 0px,#00ff2a 80px,#00ff26 160px,#04ff24 194px,#4aff22 236px,#b7ff1e 280px,#fffa1c 304px,#ffb112 332px,#ff7009 374px,#ff3a02 442px,#ff1a00 522px,#ff0900 602px,#ff0600 626px)"></i><i style="left:0px;top:81px;width:649px;background:linear-gradient(90deg,#00ff30 0px,#00ff2d 80px,#00ff2a 160px,#06ff29 196px,#52ff26 240px,#c4ff23 284px,#feff22 302px,#ffb016 332px,#ff700c 374px,#ff3a04 442px,#ff1a00 522px,#ff0900 602px,#ff0300 650px)"></i><i style="left:0px;top:84px;width:673px;background:linear-gradient(90deg,#00ff33 0px,#00ff31 80px,#00ff2f 160px,#05ff2d 196px,#4dff2b 238px,#beff29 282px,#ffff28 302px,#ffb31b 330px,#ff710f 372px,#ff3b06 438px,#ff1b01 518px,#ff0900 598px,#ff0000 674px)"></i><i style="left:0px;top:87px;width:697px;background:linear-gradient(90deg,#00ff36 0px,#00ff35 80px,#00ff33 160px,#05ff32 196px,#4dff31 238px,#beff2f 282px,#fffe2e 302px,#ffb21f 330px,#ff7012 372px,#ff3b08 438px,#ff1a02 518px,#ff0900 598px,#ff0000 678px,#ff0000 696px)"></i><i style="left:0px;top:90px;width:721px;background:linear-gradient(90deg,#00ff3a 0px,#00ff39 80px,#00ff38 160px,#04ff37 196px,#4dff36 238px,#bfff35 282px,#fffd34 302px,#ffb123 330px,#ff6f15 372px,#ff3a0a 438px,#ff1a03 518px,#ff0900 598px,#ff0000 678px,#ff0000 720px)"></i><i style="left:0px;top:93px;width:745px;background:linear-gradient(90deg,#00ff3d 0px,#00ff3d 80px,#00ff3c 160px,#04ff3c 196px,#4cff3b 238px,#bfff3b 282px,#fffc3a 302px,#ffb028 330px,#ff6f19 372px,#ff390c 438px,#ff1905 518px,#ff0801 598px,#ff0000 678px,#ff0000 744px)"></i><i style="left:0px;top:96px;width:768px;background:linear-gradient(90deg,#00ff41 0px,#00ff41 80px,#00ff41 160px,#06ff41 198px,#51ff41 240px,#c0ff41 282px,#fffb40 302px,#ffaf2c 330px,#ff6e1c 372px,#ff390e 438px,#ff1906 518px,#ff0802 598px,#ff0000 678px,#ff0000 758px,#ff0000 768px)"></i><i style="left:0px;top:99px;width:792px;background:linear-gradient(90deg,#00ff45 0px,#00ff45 80px,#00ff46 160px,#05ff46 198px,#50ff47 240px,#c0ff47 282px,#fffa46 302px,#ffae31 330px,#ff6d1f 372px,#ff3810 438px,#ff1808 518px,#ff0803 598px,#ff0000 678px,#ff0000 758px,#ff0000 792px)"></i><i style="left:0px;top:102px;width:816px;background:linear-gradient(90deg,#00ff49 0px,#00ff49 80px,#00ff4b 160px,#05ff4c 198px,#4cff4d 238px,#baff4e 280px,#fdff4e 300px,#ffad36 330px,#ff6c23 372px,#ff3713 438px,#ff1809 518px,#ff0704 598px,#ff0001 678px,#ff0000 758px,#ff0000 816px)"></i><i style="left:0px;top:105px;width:840px;background:linear-gradient(90deg,#00ff4c 0px,#00ff4e 80px,#00ff50 160px,#04ff51 198px,#4bff53 238px,#bbff54 280px,#feff56 300px,#ffb13c 328px,#ff7028 368px,#ff3a16 432px,#ff190b 512px,#ff0805 592px,#ff0002 672px,#ff0000 752px,#ff0000 832px,#ff0000 840px)"></i><i style="left:0px;top:108px;width:864px;background:linear-gradient(90deg,#00ff50 0px,#00ff52 80px,#00ff55 160px,#04ff57 198px,#4bff59 238px,#bbff5b 280px,#ffff5d 300px,#ffb443 326px,#ff712c 366px,#ff3c19 428px,#ff1a0d 508px,#ff0807 588px,#ff0003 668px,#ff0001 748px,#ff0000 828px,#ff0000 864px)"></i><i style="left:0px;top:111px;width:887px;background:linear-gradient(90deg,#00ff54 0px,#00ff57 80px,#00ff5a 160px,#06ff5c 200px,#4fff5f 240px,#c2ff63 282px,#fffe64 300px,#ffb348 326px,#ff7130 366px,#ff3b1c 428px,#ff190f 508px,#ff0808 588px,#ff0004 668px,#ff0001 748px,#ff0000 828px,#ff0000 888px)"></i><i style="left:0px;top:114px;width:911px;background:linear-gradient(90deg,#00ff58 0px,#00ff5b 80px,#00ff60 160px,#05ff62 200px,#4fff66 240px,#c2ff6a 282px,#fffd6b 300px,#ffb24e 326px,#ff7034 366px,#ff391e 430px,#ff1811 510px,#ff0709 590px,#ff0005 670px,#ff0002 750px,#ff0000 830px,#ff0000 910px,#ff0000 912px)"></i><i style="left:0px;top:117px;width:929px;background:linear-gradient(90deg,#00ff5c 0px,#00ff60 80px,#00ff65 160px,#05ff68 200px,#4eff6c 240px,#bcff71 280px,#fffc72 300px,#ffb153 326px,#ff7139 364px,#ff3b22 426px,#ff1913 506px,#ff070b 586px,#ff0006 666px,#ff0003 746px,#ff0001 826px,#ff0000 906px,#ff0000 928px)"></i><i style="left:0px;top:120px;width:926px;background:linear-gradient(90deg,#00ff60 0px,#00ff65 80px,#00ff6b 160px,#04ff6f 200px,#4fff73 240px,#beff79 280px,#fffa7a 300px,#ffb059 326px,#ff6e3c 366px,#ff3823 430px,#ff1714 510px,#ff060c 590px,#ff0007 670px,#ff0003 750px,#ff0001 830px,#ff0000 910px,#ff0000 926px)"></i><i style="left:1px;top:123px;width:923px;background:linear-gradient(90deg,#00ff64 0px,#00ff6a 80px,#00ff70 160px,#05ff75 200px,#50ff7a 240px,#c0ff81 280px,#fffe84 298px,#ffb260 324px,#ff7142 362px,#ff3a27 424px,#ff1817 504px,#ff070d 584px,#ff0008 664px,#ff0004 744px,#ff0002 824px,#ff0000 904px,#ff0000 922px)"></i><i style="left:1px;top:126px;width:919px;background:linear-gradient(90deg,#00ff69 0px,#00ff6f 80px,#00ff76 160px,#05ff7b 200px,#4cff81 238px,#bcff88 278px,#fffb8a 298px,#ffaf65 324px,#ff6f45 362px,#ff392a 424px,#ff1718 504px,#ff060f 584px,#ff0009 664px,#ff0005 744px,#ff0003 824px,#ff0001 904px,#ff0000 920px)"></i><i style="left:2px;top:129px;width:916px;background:linear-gradient(90deg,#00ff6d 0px,#00ff74 80px,#00ff7c 160px,#05ff82 200px,#4dff88 238px,#beff91 278px,#ffff95 296px,#ffb16d 322px,#ff704b 360px,#ff3a2e 420px,#ff181b 500px,#ff0711 580px,#ff000a 660px,#ff0006 740px,#ff0003 820px,#ff0001 900px,#ff0001 916px)"></i><i style="left:3px;top:132px;width:913px;background:linear-gradient(90deg,#00ff72 0px,#00ff79 80px,#00ff82 160px,#05ff89 200px,#4fff90 238px,#c1ff99 278px,#fffb9c 296px,#ffaf72 322px,#ff6e4e 360px,#ff3830 422px,#ff171c 502px,#ff0612 582px,#ff000b 662px,#ff0007 742px,#ff0004 822px,#ff0002 902px,#ff0002 912px)"></i><i style="left:3px;top:135px;width:909px;background:linear-gradient(90deg,#00ff76 0px,#00ff7e 80px,#00ff89 160px,#06ff90 200px,#50ff98 238px,#bdffa1 276px,#ffffa7 294px,#ffb17a 320px,#ff6f54 358px,#ff3934 418px,#ff171f 498px,#ff0613 578px,#ff000c 658px,#ff0008 738px,#ff0005 818px,#ff0002 898px,#ff0002 910px)"></i><i style="left:4px;top:138px;width:906px;background:linear-gradient(90deg,#00ff7b 0px,#00ff83 80px,#00ff8f 160px,#04ff96 198px,#4cff9f 236px,#b9ffaa 274px,#fffcae 294px,#ffb382 318px,#ff725b 354px,#ff3c39 412px,#ff1822 492px,#ff0716 572px,#ff000e 652px,#ff0009 732px,#ff0006 812px,#ff0003 892px,#ff0003 906px)"></i><i style="left:5px;top:141px;width:903px;background:linear-gradient(90deg,#00ff7f 0px,#00ff89 80px,#00ff96 160px,#04ff9e 198px,#4effa7 236px,#bcffb3 274px,#feffba 292px,#ffb088 318px,#ff6e5d 356px,#ff383a 416px,#ff1623 496px,#ff0516 576px,#ff000f 656px,#ff000a 736px,#ff0006 816px,#ff0004 896px,#ff0003 902px)"></i><i style="left:6px;top:144px;width:899px;background:linear-gradient(90deg,#00ff84 0px,#00ff8e 80px,#00ff9c 160px,#04ffa5 198px,#4affaf 234px,#b8ffbc 272px,#fffbc1 292px,#ffb290 316px,#ff7165 352px,#ff3b40 410px,#ff1726 490px,#ff0619 570px,#ff0010 650px,#ff000b 730px,#ff0007 810px,#ff0004 890px,#ff0004 900px)"></i><i style="left:6px;top:147px;width:896px;background:linear-gradient(90deg,#00ff89 0px,#00ff94 80px,#00ffa3 160px,#05ffad 198px,#4cffb7 234px,#bbffc5 272px,#ffffcd 290px,#ffb499 314px,#ff726b 350px,#ff3b43 408px,#ff1729 488px,#ff061a 568px,#ff0012 648px,#ff000c 728px,#ff0008 808px,#ff0005 888px,#ff0005 896px)"></i><i style="left:7px;top:150px;width:893px;background:linear-gradient(90deg,#00ff8e 0px,#00ff9a 80px,#00ffaa 160px,#05ffb4 198px,#4dffc0 234px,#bfffcf 272px,#fffbd4 290px,#ffb19e 314px,#ff706f 350px,#ff3a46 408px,#ff162b 488px,#ff051c 568px,#ff0013 648px,#ff000d 728px,#ff0009 808px,#ff0006 888px,#ff0006 892px)"></i><i style="left:8px;top:153px;width:889px;background:linear-gradient(90deg,#00ff93 0px,#00ffa0 80px,#00ffb1 160px,#06ffbc 198px,#4fffc9 234px,#c2ffd9 272px,#ffffe1 288px,#ffb3a8 312px,#ff7175 348px,#ff3b4b 404px,#ff172e 484px,#ff051e 564px,#ff0014 644px,#ff000e 724px,#ff000a 804px,#ff0007 884px,#ff0006 890px)"></i><i style="left:9px;top:156px;width:886px;background:linear-gradient(90deg,#00ff98 0px,#00ffa6 80px,#00ffb9 160px,#04ffc4 196px,#4cffd1 232px,#beffe3 270px,#fffbe8 288px,#ffb0ad 312px,#ff6f79 348px,#ff394d 406px,#ff162f 486px,#ff051f 566px,#ff0015 646px,#ff000f 726px,#ff000a 806px,#ff0007 886px)"></i><i style="left:10px;top:159px;width:882px;background:linear-gradient(90deg,#00ff9d 0px,#00ffac 80px,#00ffc0 160px,#04ffcc 196px,#4effdb 232px,#bbffec 268px,#fffef6 286px,#ffb1b7 310px,#ff6f80 346px,#ff3a52 402px,#ff1632 482px,#ff0521 562px,#ff0017 642px,#ff0010 722px,#ff000b 802px,#ff0008 882px)"></i><i style="left:10px;top:162px;width:879px;background:linear-gradient(90deg,#00ffa2 0px,#00ffb2 80px,#00ffc8 160px,#05ffd5 196px,#4fffe4 232px,#befff7 268px,#fffafd 286px,#ffaebc 310px,#ff6d84 346px,#ff3754 404px,#ff1534 484px,#ff0422 564px,#ff0018 644px,#ff0011 724px,#ff000c 804px,#ff0009 878px)"></i><i style="left:11px;top:165px;width:875px;background:linear-gradient(90deg,#00ffa7 0px,#00ffb8 80px,#00ffd0 160px,#06ffdd 196px,#51ffee 232px,#ccf9ff 272px,#ffedfd 288px,#ffa6be 312px,#ff6683 350px,#ff3254 410px,#ff1234 490px,#ff0323 570px,#ff0018 650px,#ff0011 730px,#ff000d 810px,#ff0009 876px)"></i><i style="left:12px;top:168px;width:872px;background:linear-gradient(90deg,#00ffad 0px,#00ffbf 80px,#00ffd8 160px,#03ffe5 194px,#49fff6 228px,#a8f4ff 262px,#ffe2fd 290px,#ff9abb 316px,#ff5d81 356px,#ff2b50 422px,#ff0e33 502px,#ff0123 582px,#ff0018 662px,#ff0012 742px,#ff000d 822px,#ff000a 872px)"></i><i style="left:13px;top:171px;width:868px;background:linear-gradient(90deg,#00ffb2 0px,#00ffc5 80px,#00ffe0 160px,#04ffef 194px,#4ffdff 230px,#e7ddff 284px,#ffd0f7 294px,#ff8cb5 322px,#ff517a 366px,#ff214a 440px,#ff0a30 520px,#ff0021 600px,#ff0018 680px,#ff0011 760px,#ff000d 840px,#ff000b 868px)"></i><i style="left:14px;top:174px;width:865px;background:linear-gradient(90deg,#00ffb8 0px,#00ffcc 80px,#00ffe8 160px,#05fff8 194px,#58f1ff 234px,#ffccfd 294px,#ff89ba 322px,#ff4f7e 366px,#ff204d 440px,#ff0932 520px,#ff0023 600px,#ff0019 680px,#ff0012 760px,#ff000d 840px,#ff000c 864px)"></i><i style="left:15px;top:177px;width:861px;background:linear-gradient(90deg,#00ffbe 0px,#00ffd3 80px,#00fff1 160px,#05fdff 194px,#60e5ff 238px,#ffc2fd 296px,#ff7fb7 326px,#ff487c 372px,#ff1b4b 450px,#ff0731 530px,#ff0022 610px,#ff0019 690px,#ff0012 770px,#ff000e 850px,#ff000d 862px)"></i><i style="left:16px;top:180px;width:858px;background:linear-gradient(90deg,#00ffc3 0px,#00ffda 80px,#00fff9 160px,#06f3ff 194px,#63dbff 240px,#ffb9fd 298px,#ff79b8 328px,#ff437c 376px,#ff184a 456px,#ff0532 536px,#ff0023 616px,#ff0019 696px,#ff0013 776px,#ff000e 856px,#ff000e 858px)"></i><i style="left:17px;top:183px;width:854px;background:linear-gradient(90deg,#00ffc9 0px,#00ffe1 80px,#00fcff 160px,#04ecff 192px,#5dd4ff 238px,#ffaffd 300px,#ff71b6 332px,#ff3d7a 382px,#ff164a 462px,#ff0432 542px,#ff0023 622px,#ff001a 702px,#ff0013 782px,#ff000f 854px)"></i><i style="left:18px;top:186px;width:850px;background:linear-gradient(90deg,#00ffcf 0px,#00ffe8 80px,#00f9ff 148px,#04e3ff 192px,#5ccbff 238px,#ffa7fd 302px,#ff6cb7 334px,#ff3a7b 384px,#ff144c 464px,#ff0333 544px,#ff0024 624px,#ff001b 704px,#ff0014 784px,#ff0010 850px)"></i><i style="left:19px;top:189px;width:847px;background:linear-gradient(90deg,#00ffd5 0px,#00fff0 80px,#00f8ff 132px,#05dbff 192px,#5fc3ff 240px,#ff9ffd 304px,#ff66b8 336px,#ff377d 386px,#ff134d 466px,#ff0234 546px,#ff0025 626px,#ff001c 706px,#ff0015 786px,#ff0011 846px)"></i><i style="left:20px;top:192px;width:843px;background:linear-gradient(90deg,#00ffdc 0px,#00fff7 80px,#00f3ff 126px,#05d4ff 192px,#62baff 242px,#ff97fc 306px,#ff5fb6 340px,#ff327b 392px,#ff104d 472px,#ff0134 552px,#ff0026 632px,#ff001c 712px,#ff0015 792px,#ff0012 844px)"></i><i style="left:21px;top:195px;width:840px;background:linear-gradient(90deg,#00ffe2 0px,#00ffff 80px,#00dbff 160px,#06ccff 192px,#65b3ff 244px,#ff8ffc 308px,#ff5bb7 342px,#ff2e7a 396px,#ff0e4d 476px,#ff0035 556px,#ff0026 636px,#ff001d 716px,#ff0016 796px,#ff0013 840px)"></i><i style="left:22px;top:198px;width:836px;background:linear-gradient(90deg,#00ffe8 0px,#00f9ff 76px,#00d6ff 156px,#04c6ff 190px,#5baeff 240px,#ff88fc 310px,#ff54b5 346px,#ff2978 402px,#ff0c4d 482px,#ff0035 562px,#ff0027 642px,#ff001d 722px,#ff0016 802px,#ff0014 836px)"></i><i style="left:23px;top:201px;width:832px;background:linear-gradient(90deg,#00ffef 0px,#00f8ff 60px,#00d6ff 140px,#05bfff 190px,#5ea7ff 242px,#ff81fc 312px,#ff50b6 348px,#ff277a 404px,#ff0b4e 484px,#ff0036 564px,#ff0028 644px,#ff001e 724px,#ff0017 804px,#ff0015 832px)"></i><i style="left:24px;top:204px;width:829px;background:linear-gradient(90deg,#00fff6 0px,#00f4ff 52px,#00d3ff 132px,#05b9ff 190px,#61a0ff 244px,#ff7bfb 314px,#ff4cb6 350px,#ff257b 406px,#ff0a4f 486px,#ff0038 566px,#ff0029 646px,#ff001f 726px,#ff0018 806px,#ff0016 828px)"></i><i style="left:25px;top:207px;width:825px;background:linear-gradient(90deg,#00fffd 0px,#00e2ff 80px,#00c0ff 160px,#06b3ff 190px,#6499ff 246px,#ff75fb 316px,#ff46b4 354px,#ff2179 412px,#ff084f 492px,#ff0038 572px,#ff0029 652px,#ff001f 732px,#ff0018 812px,#ff0017 826px)"></i><i style="left:26px;top:210px;width:821px;background:linear-gradient(90deg,#00fbff 0px,#00dcff 80px,#00baff 160px,#06adff 190px,#6393ff 246px,#ff6ffb 318px,#ff42b5 356px,#ff1e79 416px,#ff074f 496px,#ff0038 576px,#ff002a 656px,#ff0020 736px,#ff0019 816px,#ff0018 822px)"></i><i style="left:27px;top:213px;width:818px;background:linear-gradient(90deg,#00f4ff 0px,#00d5ff 80px,#00b4ff 160px,#05a8ff 188px,#5e8fff 244px,#ff69fa 320px,#ff3db3 360px,#ff1a77 422px,#ff054f 502px,#ff0038 582px,#ff002a 662px,#ff0020 742px,#ff0019 818px)"></i><i style="left:28px;top:216px;width:814px;background:linear-gradient(90deg,#00eeff 0px,#00cfff 80px,#00afff 160px,#05a3ff 188px,#6189ff 246px,#ff64fa 322px,#ff3ab4 362px,#ff1879 424px,#ff0450 504px,#ff0039 584px,#ff002b 664px,#ff0021 744px,#ff001a 814px)"></i><i style="left:29px;top:219px;width:810px;background:linear-gradient(90deg,#00e7ff 0px,#00c9ff 80px,#00a9ff 160px,#069dff 188px,#6483ff 248px,#ff5efa 324px,#ff37b5 364px,#ff1678 428px,#ff0351 508px,#ff003a 588px,#ff002b 668px,#ff0021 748px,#ff001c 810px)"></i><i style="left:30px;top:222px;width:807px;background:linear-gradient(90deg,#00e1ff 0px,#00c4ff 80px,#00a4ff 160px,#0698ff 188px,#667eff 250px,#ff5cfe 324px,#ff35b8 364px,#ff167c 426px,#ff0353 506px,#ff003c 586px,#ff002d 666px,#ff0023 746px,#ff001d 806px)"></i><i style="left:31px;top:225px;width:803px;background:linear-gradient(90deg,#00dcff 0px,#00beff 80px,#009fff 160px,#0793ff 188px,#6679ff 250px,#ff57fe 326px,#ff31b6 368px,#ff137b 432px,#ff0153 512px,#ff003c 592px,#ff002d 672px,#ff0023 752px,#ff001e 802px)"></i><i style="left:32px;top:228px;width:799px;background:linear-gradient(90deg,#00d6ff 0px,#00b9ff 80px,#009aff 160px,#058fff 186px,#6176ff 248px,#ff52fd 328px,#ff2eb7 370px,#ff107a 436px,#ff0053 516px,#ff003c 596px,#ff002e 676px,#ff0023 756px,#ff001f 800px)"></i><i style="left:33px;top:231px;width:795px;background:linear-gradient(90deg,#00d1ff 0px,#00b4ff 80px,#0095ff 160px,#068bff 186px,#6471ff 250px,#ff4efd 330px,#ff2bb7 372px,#ff0f7b 438px,#ff0054 518px,#ff003d 598px,#ff002e 678px,#ff0024 758px,#ff0020 796px)"></i><i style="left:34px;top:234px;width:792px;background:linear-gradient(90deg,#00cbff 0px,#00afff 80px,#0091ff 160px,#0686ff 186px,#666cff 252px,#ff49fc 332px,#ff27b6 376px,#ff0c7a 444px,#ff0054 524px,#ff003d 604px,#ff002f 684px,#ff0024 764px,#ff0022 792px)"></i><i style="left:35px;top:237px;width:788px;background:linear-gradient(90deg,#00c6ff 0px,#00aaff 80px,#008cff 160px,#0782ff 186px,#6568ff 252px,#fe47ff 332px,#ff25b6 378px,#ff0b7b 446px,#ff0055 526px,#ff003e 606px,#ff0030 686px,#ff0025 766px,#ff0023 788px)"></i><i style="left:36px;top:240px;width:784px;background:linear-gradient(90deg,#00c1ff 0px,#00a5ff 80px,#0088ff 160px,#087eff 186px,#6864ff 254px,#ff43ff 334px,#ff22b7 380px,#ff097a 450px,#ff0055 530px,#ff003f 610px,#ff0030 690px,#ff0026 770px,#ff0024 784px)"></i><i style="left:38px;top:243px;width:780px;background:linear-gradient(90deg,#00bdff 0px,#00a1ff 80px,#0084ff 160px,#067bff 184px,#6461ff 252px,#f741ff 332px,#ff3af3 342px,#ff1cae 390px,#ff0573 466px,#ff0051 546px,#ff003d 626px,#ff002f 706px,#ff0025 780px)"></i><i style="left:39px;top:246px;width:777px;background:linear-gradient(90deg,#00b8ff 0px,#009dff 80px,#0080ff 160px,#0777ff 184px,#665dff 254px,#f83dff 334px,#ff35ef 346px,#ff18ab 396px,#ff0371 474px,#ff0050 554px,#ff003c 634px,#ff002f 714px,#ff0027 776px)"></i><i style="left:40px;top:249px;width:773px;background:linear-gradient(90deg,#00b3ff 0px,#0098ff 80px,#007cff 160px,#0773ff 184px,#6958ff 256px,#f83aff 336px,#ff30eb 350px,#ff15a7 402px,#ff016f 482px,#ff004f 562px,#ff003c 642px,#ff002f 722px,#ff0028 772px)"></i><i style="left:41px;top:252px;width:769px;background:linear-gradient(90deg,#00afff 0px,#0094ff 80px,#0078ff 160px,#0870ff 184px,#6855ff 256px,#f537ff 336px,#ff31f6 346px,#ff16b0 396px,#ff0275 474px,#ff0054 554px,#ff003f 634px,#ff0031 714px,#ff0029 770px)"></i><i style="left:42px;top:255px;width:765px;background:linear-gradient(90deg,#00abff 0px,#0090ff 80px,#0075ff 160px,#086cff 184px,#6a51ff 258px,#f634ff 338px,#ff2df2 350px,#ff13ac 402px,#ff0073 482px,#ff0053 562px,#ff003e 642px,#ff0031 722px,#ff002b 766px)"></i><i style="left:43px;top:258px;width:762px;background:linear-gradient(90deg,#00a7ff 0px,#008dff 80px,#0071ff 160px,#0969ff 184px,#6d4eff 260px,#f630ff 340px,#ff2af1 352px,#ff11ad 404px,#ff0073 484px,#ff0053 564px,#ff003f 644px,#ff0031 724px,#ff002c 762px)"></i><i style="left:44px;top:261px;width:758px;background:linear-gradient(90deg,#00a3ff 0px,#0089ff 80px,#006eff 160px,#0966ff 184px,#6f4aff 262px,#f72dff 342px,#ff27f1 354px,#ff0fab 408px,#ff0073 488px,#ff0054 568px,#ff0040 648px,#ff0032 728px,#ff002e 758px)"></i><i style="left:46px;top:264px;width:754px;background:linear-gradient(90deg,#009fff 0px,#0085ff 80px,#006bff 160px,#0a63ff 184px,#7147ff 264px,#f82aff 344px,#ff24f1 356px,#ff0dac 410px,#ff0074 490px,#ff0055 570px,#ff0040 650px,#ff0033 730px,#ff002f 754px)"></i><i style="left:47px;top:267px;width:750px;background:linear-gradient(90deg,#009bff 0px,#0082ff 80px,#0068ff 160px,#0b60ff 184px,#7044ff 264px,#f528ff 344px,#ff24f7 354px,#ff0db2 406px,#ff0078 486px,#ff0057 566px,#ff0042 646px,#ff0034 726px,#ff0031 750px)"></i><i style="left:48px;top:270px;width:746px;background:linear-gradient(90deg,#0097ff 0px,#007eff 80px,#0065ff 160px,#0b5dff 184px,#7042ff 264px,#f226ff 344px,#ff21f7 356px,#ff0bb1 410px,#ff0078 490px,#ff0057 570px,#ff0043 650px,#ff0035 730px,#ff0032 746px)"></i><i style="left:49px;top:273px;width:742px;background:linear-gradient(90deg,#0094ff 0px,#007bff 80px,#0062ff 160px,#0c5aff 184px,#6f3fff 264px,#ef24ff 344px,#ff1ffa 356px,#ff0ab3 410px,#ff007a 490px,#ff0059 570px,#ff0044 650px,#ff0036 730px,#ff0034 742px)"></i><i style="left:50px;top:276px;width:739px;background:linear-gradient(90deg,#0090ff 0px,#0078ff 80px,#005fff 160px,#0e56ff 186px,#713cff 266px,#f022ff 346px,#ff1df9 358px,#ff09b4 412px,#ff007a 492px,#ff005a 572px,#ff0045 652px,#ff0036 732px,#ff0035 738px)"></i><i style="left:52px;top:279px;width:735px;background:linear-gradient(90deg,#008dff 0px,#0075ff 80px,#005cff 160px,#1153ff 188px,#7339ff 268px,#f11fff 348px,#ff1af9 360px,#ff07b2 416px,#ff007a 496px,#ff005a 576px,#ff0045 656px,#ff0037 734px)"></i><i style="left:53px;top:282px;width:731px;background:linear-gradient(90deg,#008aff 0px,#0072ff 80px,#0059ff 160px,#154fff 192px,#7835ff 272px,#f51cff 352px,#ff18f8 362px,#ff06b3 418px,#ff007b 498px,#ff005b 578px,#ff0046 658px,#ff0039 730px)"></i><i style="left:54px;top:285px;width:727px;background:linear-gradient(90deg,#0086ff 0px,#006fff 80px,#0056ff 160px,#1a4bff 196px,#7d32ff 276px,#f919ff 356px,#ff10e3 378px,#ff01a0 442px,#ff0071 522px,#ff0055 602px,#ff0042 682px,#ff003a 728px)"></i><i style="left:55px;top:288px;width:723px;background:linear-gradient(90deg,#0083ff 0px,#006cff 80px,#0054ff 160px,#1e48ff 200px,#822fff 280px,#fd16ff 360px,#ff03b3 422px,#ff007c 502px,#ff005c 582px,#ff0047 662px,#ff003c 724px)"></i><i style="left:57px;top:291px;width:719px;background:linear-gradient(90deg,#0080ff 0px,#0069ff 80px,#0051ff 160px,#2543ff 206px,#892bff 286px,#ff13fa 366px,#ff02b4 424px,#ff007d 504px,#ff005d 584px,#ff0048 664px,#ff003d 720px)"></i><i style="left:58px;top:294px;width:715px;background:linear-gradient(90deg,#007dff 0px,#0066ff 80px,#004fff 160px,#2c3fff 212px,#9127ff 292px,#ff11fc 366px,#ff02b6 424px,#ff007f 504px,#ff005e 584px,#ff0049 664px,#ff003f 716px)"></i><i style="left:59px;top:297px;width:711px;background:linear-gradient(90deg,#007aff 0px,#0064ff 80px,#004cff 160px,#313cff 216px,#9524ff 296px,#ff0ffc 368px,#ff01b6 426px,#ff007f 506px,#ff005f 586px,#ff004a 666px,#ff0041 712px)"></i><i style="left:61px;top:300px;width:707px;background:linear-gradient(90deg,#0077ff 0px,#0061ff 80px,#004aff 160px,#3738ff 222px,#9d21ff 302px,#ff0dfb 370px,#ff00b4 430px,#ff007f 510px,#ff005f 590px,#ff004a 670px,#ff0042 708px)"></i><i style="left:62px;top:303px;width:704px;background:linear-gradient(90deg,#0075ff 0px,#005eff 80px,#0048ff 160px,#3e34ff 228px,#a41dff 308px,#ff0cfb 372px,#ff00b5 432px,#ff0080 512px,#ff0060 592px,#ff004b 672px,#ff0044 704px)"></i><i style="left:63px;top:306px;width:700px;background:linear-gradient(90deg,#0072ff 0px,#005cff 80px,#0046ff 160px,#4531ff 234px,#ab1aff 314px,#ff0afa 374px,#ff00b3 436px,#ff007f 516px,#ff0060 596px,#ff004b 676px,#ff0046 700px)"></i><i style="left:64px;top:309px;width:696px;background:linear-gradient(90deg,#006fff 0px,#005aff 80px,#0044ff 160px,#4c2dff 240px,#b217ff 320px,#ff09fc 374px,#ff00b5 436px,#ff0081 516px,#ff0061 596px,#ff004c 676px,#ff0048 696px)"></i><i style="left:66px;top:312px;width:692px;background:linear-gradient(90deg,#006dff 0px,#0057ff 80px,#0141ff 160px,#4c2bff 240px,#b116ff 320px,#ff07fc 376px,#ff00b5 438px,#ff0081 518px,#ff0062 598px,#ff004d 678px,#ff004a 692px)"></i><i style="left:67px;top:315px;width:688px;background:linear-gradient(90deg,#006aff 0px,#0055ff 80px,#013fff 160px,#4c2aff 240px,#b014ff 320px,#ff06fb 378px,#ff00b4 442px,#ff0081 522px,#ff0062 602px,#ff004d 682px,#ff004c 688px)"></i><i style="left:69px;top:318px;width:684px;background:linear-gradient(90deg,#0068ff 0px,#0053ff 80px,#023dff 160px,#4c28ff 240px,#af13ff 320px,#ff04fa 380px,#ff00b4 444px,#ff0081 524px,#ff0062 604px,#ff004e 684px)"></i><i style="left:70px;top:321px;width:680px;background:linear-gradient(90deg,#0065ff 0px,#0050ff 80px,#023bff 160px,#4c26ff 240px,#ad12ff 320px,#ff03fa 382px,#ff00b3 448px,#ff0081 528px,#ff0062 608px,#ff004f 680px)"></i><i style="left:71px;top:324px;width:676px;background:linear-gradient(90deg,#0063ff 0px,#004eff 80px,#033aff 160px,#4c25ff 240px,#ac10ff 320px,#ff02fc 382px,#ff00b5 448px,#ff0083 528px,#ff0064 608px,#ff0051 676px)"></i><i style="left:73px;top:327px;width:672px;background:linear-gradient(90deg,#0060ff 0px,#004cff 80px,#0338ff 160px,#4c23ff 240px,#ab0fff 320px,#ff01fb 384px,#ff00b5 450px,#ff0083 530px,#ff0064 610px,#ff0053 672px)"></i><i style="left:74px;top:330px;width:668px;background:linear-gradient(90deg,#005eff 0px,#004aff 80px,#0436ff 160px,#4c22ff 240px,#aa0eff 320px,#ff00fa 386px,#ff00b3 454px,#ff0083 534px,#ff0064 614px,#ff0055 668px)"></i><i style="left:75px;top:333px;width:664px;background:linear-gradient(90deg,#005cff 0px,#0048ff 80px,#0434ff 160px,#4c20ff 240px,#a90dff 320px,#ff00fa 388px,#ff00b4 456px,#ff0083 536px,#ff0065 616px,#ff0058 664px)"></i><i style="left:77px;top:336px;width:659px;background:linear-gradient(90deg,#005aff 0px,#0046ff 80px,#0532ff 160px,#4c1fff 240px,#a80cff 320px,#ff00fc 388px,#ff00b5 456px,#ff0085 536px,#ff0066 616px,#ff005a 660px)"></i><i style="left:78px;top:339px;width:655px;background:linear-gradient(90deg,#0058ff 0px,#0044ff 80px,#0531ff 160px,#4c1dff 240px,#a70bff 320px,#ff00fb 390px,#ff00b4 460px,#ff0084 540px,#ff0066 620px,#ff005c 656px)"></i><i style="left:80px;top:342px;width:651px;background:linear-gradient(90deg,#0056ff 0px,#0042ff 80px,#0530ff 158px,#4a1cff 238px,#a40aff 318px,#ff00fa 392px,#ff00b4 462px,#ff0085 542px,#ff0066 622px,#ff005e 652px)"></i><i style="left:81px;top:345px;width:647px;background:linear-gradient(90deg,#0054ff 0px,#0041ff 80px,#052eff 158px,#4a1bff 238px,#a309ff 318px,#ff00fc 392px,#ff00b6 462px,#ff0086 542px,#ff0068 622px,#ff0060 648px)"></i><i style="left:83px;top:348px;width:643px;background:linear-gradient(90deg,#0052ff 0px,#003fff 80px,#052dff 156px,#491aff 236px,#a008ff 316px,#ff00fc 394px,#ff00b6 464px,#ff0086 544px,#ff0068 624px,#ff0062 644px)"></i><i style="left:84px;top:351px;width:639px;background:linear-gradient(90deg,#0050ff 0px,#003dff 80px,#052bff 156px,#4919ff 236px,#9f07ff 316px,#ff00fb 396px,#ff00b4 468px,#ff0086 548px,#ff0068 628px,#ff0065 640px)"></i><i style="left:86px;top:354px;width:635px;background:linear-gradient(90deg,#004eff 0px,#003bff 80px,#062aff 156px,#4918ff 236px,#9e06ff 316px,#ff00fd 396px,#ff00b6 468px,#ff0087 548px,#ff0069 628px,#ff0067 634px)"></i><i style="left:87px;top:357px;width:631px;background:linear-gradient(90deg,#004cff 0px,#003aff 80px,#0529ff 154px,#4717ff 234px,#9b06ff 314px,#fd00ff 394px,#ff00b3 474px,#ff0086 554px,#ff006a 630px)"></i><i style="left:89px;top:360px;width:627px;background:linear-gradient(90deg,#004aff 0px,#0038ff 80px,#0627ff 154px,#4716ff 234px,#9b05ff 314px,#fb00ff 394px,#ff00b5 474px,#ff0087 554px,#ff006c 626px)"></i><i style="left:90px;top:363px;width:623px;background:linear-gradient(90deg,#0048ff 0px,#0036ff 80px,#0526ff 152px,#4615ff 232px,#9805ff 312px,#f700ff 392px,#ff00f1 410px,#ff00ab 490px,#ff0081 570px,#ff006e 622px)"></i><i style="left:92px;top:366px;width:618px;background:linear-gradient(90deg,#0046ff 0px,#0035ff 80px,#0625ff 152px,#4614ff 232px,#9704ff 312px,#f500ff 392px,#ff00f5 408px,#ff00af 486px,#ff0084 566px,#ff0071 618px)"></i><i style="left:93px;top:369px;width:614px;background:linear-gradient(90deg,#0045ff 0px,#0033ff 80px,#0524ff 150px,#4413ff 230px,#9403ff 310px,#f100ff 390px,#ff00f6 408px,#ff00b1 486px,#ff0086 566px,#ff0073 614px)"></i><i style="left:95px;top:372px;width:610px;background:linear-gradient(90deg,#0043ff 0px,#0032ff 80px,#0623ff 150px,#4412ff 230px,#9403ff 310px,#f000ff 390px,#ff00f8 408px,#ff00b2 486px,#ff0087 566px,#ff0076 610px)"></i><i style="left:96px;top:375px;width:606px;background:linear-gradient(90deg,#0041ff 0px,#0030ff 80px,#0522ff 148px,#4311ff 228px,#9102ff 308px,#ec00ff 388px,#ff00fa 408px,#ff00b4 486px,#ff0088 566px,#ff0078 606px)"></i><i style="left:98px;top:378px;width:602px;background:linear-gradient(90deg,#0040ff 0px,#002fff 80px,#0620ff 148px,#4310ff 228px,#9102ff 308px,#ea00ff 388px,#ff00f9 410px,#ff00b2 490px,#ff0088 570px,#ff007b 602px)"></i><i style="left:99px;top:381px;width:598px;background:linear-gradient(90deg,#003eff 0px,#002dff 80px,#061fff 148px,#430fff 228px,#9001ff 308px,#e900ff 388px,#ff00fb 410px,#ff00b4 490px,#ff0089 570px,#ff007e 598px)"></i><i style="left:101px;top:384px;width:593px;background:linear-gradient(90deg,#003dff 0px,#002cff 80px,#061eff 146px,#420eff 226px,#8e01ff 306px,#e500ff 386px,#ff00fa 412px,#ff00b4 492px,#ff0089 572px,#ff0080 594px)"></i><i style="left:102px;top:387px;width:589px;background:linear-gradient(90deg,#003bff 0px,#002bff 80px,#061dff 146px,#420eff 226px,#8d00ff 306px,#e400ff 386px,#ff00f9 414px,#ff00b4 494px,#ff0089 574px,#ff0083 590px)"></i><i style="left:104px;top:390px;width:585px;background:linear-gradient(90deg,#0039ff 0px,#0029ff 80px,#061cff 144px,#410dff 224px,#8b00ff 304px,#e100ff 384px,#ff00fb 414px,#ff00b5 494px,#ff008b 574px,#ff0086 584px)"></i><i style="left:106px;top:393px;width:581px;background:linear-gradient(90deg,#0038ff 0px,#0028ff 80px,#061bff 144px,#410cff 224px,#8b00ff 304px,#df00ff 384px,#ff00fa 416px,#ff00b5 496px,#ff008b 576px,#ff0089 580px)"></i><i style="left:107px;top:396px;width:576px;background:linear-gradient(90deg,#0037ff 0px,#0027ff 80px,#061bff 142px,#400bff 222px,#8800ff 302px,#dc00ff 382px,#ff00f9 418px,#ff00b5 498px,#ff008c 576px)"></i><i style="left:109px;top:399px;width:572px;background:linear-gradient(90deg,#0035ff 0px,#0025ff 80px,#0619ff 142px,#400bff 222px,#8800ff 302px,#db00ff 382px,#ff00fb 418px,#ff00b6 498px,#ff008f 572px)"></i><i style="left:110px;top:402px;width:568px;background:linear-gradient(90deg,#0034ff 0px,#0024ff 80px,#0619ff 140px,#3e0aff 220px,#8600ff 300px,#d800ff 380px,#ff00fa 420px,#ff00b6 500px,#ff0092 568px)"></i><i style="left:112px;top:405px;width:564px;background:linear-gradient(90deg,#0032ff 0px,#0023ff 80px,#0618ff 140px,#3f09ff 220px,#8600ff 300px,#d700ff 380px,#ff00fb 420px,#ff00b8 500px,#ff0095 564px)"></i><i style="left:114px;top:408px;width:560px;background:linear-gradient(90deg,#0031ff 0px,#0022ff 80px,#0617ff 138px,#3e09ff 218px,#8300ff 298px,#d300ff 378px,#ff00fb 422px,#ff00b8 502px,#ff0098 560px)"></i><i style="left:115px;top:411px;width:555px;background:linear-gradient(90deg,#0030ff 0px,#0021ff 80px,#0616ff 138px,#3e08ff 218px,#8300ff 298px,#d200ff 378px,#ff00fa 424px,#ff00b8 504px,#ff009b 556px)"></i><i style="left:117px;top:414px;width:551px;background:linear-gradient(90deg,#002eff 0px,#0020ff 80px,#0615ff 136px,#3d07ff 216px,#8100ff 296px,#cf00ff 376px,#ff00fb 424px,#ff00b9 504px,#ff009e 552px)"></i><i style="left:118px;top:417px;width:547px;background:linear-gradient(90deg,#002dff 0px,#001eff 80px,#0714ff 136px,#3d07ff 216px,#8100ff 296px,#cf00ff 376px,#ff00fa 426px,#ff00b9 506px,#ff00a2 546px)"></i><i style="left:120px;top:420px;width:543px;background:linear-gradient(90deg,#002cff 0px,#001dff 80px,#0614ff 134px,#3c06ff 214px,#7f00ff 294px,#cc00ff 374px,#ff00fa 428px,#ff00b9 508px,#ff00a5 542px)"></i><i style="left:122px;top:423px;width:538px;background:linear-gradient(90deg,#002bff 0px,#001cff 80px,#0713ff 134px,#3c06ff 214px,#7f00ff 294px,#cb00ff 374px,#ff00fb 428px,#ff00ba 508px,#ff00a9 538px)"></i><i style="left:123px;top:426px;width:534px;background:linear-gradient(90deg,#0029ff 0px,#001bff 80px,#0612ff 132px,#3b05ff 212px,#7d00ff 292px,#c800ff 372px,#ff00fa 430px,#ff00ba 510px,#ff00ac 534px)"></i><i style="left:125px;top:429px;width:530px;background:linear-gradient(90deg,#0028ff 0px,#001aff 80px,#0711ff 132px,#3b04ff 212px,#7c00ff 292px,#c700ff 372px,#ff00f9 432px,#ff00ba 512px,#ff00af 530px)"></i><i style="left:127px;top:432px;width:525px;background:linear-gradient(90deg,#0027ff 0px,#0019ff 80px,#0710ff 132px,#3b04ff 212px,#7c00ff 292px,#c600ff 372px,#ff00fb 432px,#ff00bb 512px,#ff00b3 526px)"></i><i style="left:128px;top:435px;width:521px;background:linear-gradient(90deg,#0026ff 0px,#0018ff 80px,#0710ff 130px,#3a03ff 210px,#7a00ff 290px,#c400ff 370px,#ff00fa 434px,#ff00bb 514px,#ff00b6 522px)"></i><i style="left:130px;top:438px;width:517px;background:linear-gradient(90deg,#0025ff 0px,#0017ff 80px,#070fff 130px,#3b03ff 210px,#7a00ff 290px,#c300ff 370px,#ff00fb 434px,#ff00bc 514px,#ff00bb 516px)"></i><i style="left:132px;top:441px;width:513px;background:linear-gradient(90deg,#0024ff 0px,#0016ff 80px,#070eff 128px,#3a03ff 208px,#7900ff 288px,#c000ff 368px,#ff00fa 436px,#ff00be 512px)"></i><i style="left:133px;top:444px;width:508px;background:linear-gradient(90deg,#0023ff 0px,#0015ff 80px,#070eff 128px,#3a02ff 208px,#7800ff 288px,#c000ff 368px,#ff00fa 438px,#ff00c2 508px)"></i><i style="left:135px;top:447px;width:504px;background:linear-gradient(90deg,#0022ff 0px,#0014ff 80px,#080dff 128px,#3a01ff 208px,#7800ff 288px,#bf00ff 368px,#ff00fb 438px,#ff00c6 504px)"></i><i style="left:137px;top:450px;width:500px;background:linear-gradient(90deg,#0021ff 0px,#0013ff 80px,#090cff 128px,#3b01ff 208px,#7800ff 288px,#be00ff 368px,#ff00fa 440px,#ff00ca 500px)"></i><i style="left:138px;top:453px;width:495px;background:linear-gradient(90deg,#0020ff 0px,#0013ff 80px,#080bff 126px,#3a01ff 206px,#7700ff 286px,#bc00ff 366px,#ff00fb 440px,#ff00ce 496px)"></i><i style="left:140px;top:456px;width:491px;background:linear-gradient(90deg,#001fff 0px,#0012ff 80px,#090bff 126px,#3a00ff 206px,#7700ff 286px,#bb00ff 366px,#ff00fb 442px,#ff00d3 490px)"></i><i style="left:142px;top:459px;width:487px;background:linear-gradient(90deg,#001eff 0px,#0011ff 80px,#090aff 126px,#3a00ff 206px,#7600ff 286px,#bb00ff 366px,#ff00fa 444px,#ff00d7 486px)"></i><i style="left:143px;top:462px;width:482px;background:linear-gradient(90deg,#001dff 0px,#0010ff 80px,#0a09ff 126px,#3b00ff 206px,#7600ff 286px,#ba00ff 366px,#ff00fb 444px,#ff00db 482px)"></i><i style="left:145px;top:465px;width:478px;background:linear-gradient(90deg,#001cff 0px,#000fff 80px,#0a09ff 126px,#3b00ff 206px,#7600ff 286px,#ba00ff 366px,#ff00fa 446px,#ff00df 478px)"></i><i style="left:147px;top:468px;width:474px;background:linear-gradient(90deg,#001bff 0px,#000eff 80px,#0b08ff 126px,#3b00ff 206px,#7600ff 286px,#b900ff 366px,#ff00fb 446px,#ff00e3 474px)"></i><i style="left:149px;top:471px;width:469px;background:linear-gradient(90deg,#001aff 0px,#000eff 80px,#0b07ff 126px,#3c00ff 206px,#7600ff 286px,#b900ff 366px,#ff00fc 446px,#ff00e8 470px)"></i><i style="left:150px;top:474px;width:465px;background:linear-gradient(90deg,#0019ff 0px,#000dff 80px,#0d06ff 128px,#3e00ff 208px,#7800ff 288px,#ba00ff 368px,#ff00fc 448px,#ff00ee 464px)"></i><i style="left:152px;top:477px;width:460px;background:linear-gradient(90deg,#0018ff 0px,#000cff 80px,#0f05ff 130px,#3f00ff 210px,#7900ff 290px,#bb00ff 370px,#ff00fb 450px,#ff00f2 460px)"></i><i style="left:154px;top:480px;width:456px;background:linear-gradient(90deg,#0017ff 0px,#000bff 80px,#1004ff 132px,#4100ff 212px,#7b00ff 292px,#bc00ff 372px,#ff00fa 452px,#ff00f6 456px)"></i><i style="left:156px;top:483px;width:452px;background:linear-gradient(90deg,#0016ff 0px,#000bff 80px,#1303ff 136px,#4400ff 216px,#7e00ff 296px,#bf00ff 376px,#ff00fb 452px)"></i><i style="left:157px;top:486px;width:447px;background:linear-gradient(90deg,#0015ff 0px,#000aff 80px,#1702ff 142px,#4800ff 222px,#8300ff 302px,#c400ff 382px,#fe00ff 448px)"></i><i style="left:159px;top:489px;width:443px;background:linear-gradient(90deg,#0015ff 0px,#0009ff 80px,#1b01ff 148px,#4d00ff 228px,#8700ff 308px,#c800ff 388px,#f800ff 442px)"></i><i style="left:161px;top:492px;width:438px;background:linear-gradient(90deg,#0014ff 0px,#0009ff 80px,#2000ff 156px,#5300ff 236px,#8d00ff 316px,#cf00ff 396px,#f300ff 438px)"></i><i style="left:163px;top:495px;width:434px;background:linear-gradient(90deg,#0013ff 0px,#0008ff 80px,#2300ff 160px,#5600ff 240px,#9000ff 320px,#d100ff 400px,#ef00ff 434px)"></i><i style="left:165px;top:498px;width:429px;background:linear-gradient(90deg,#0012ff 0px,#0007ff 80px,#2300ff 160px,#5600ff 240px,#9000ff 320px,#d100ff 400px,#eb00ff 430px)"></i><i style="left:167px;top:501px;width:425px;background:linear-gradient(90deg,#0011ff 0px,#0007ff 80px,#2400ff 160px,#5600ff 240px,#9000ff 320px,#d000ff 400px,#e500ff 424px)"></i><i style="left:168px;top:504px;width:420px;background:linear-gradient(90deg,#0011ff 0px,#0006ff 80px,#2400ff 160px,#5600ff 240px,#9000ff 320px,#d000ff 400px,#e100ff 420px)"></i><i style="left:170px;top:507px;width:416px;background:linear-gradient(90deg,#0010ff 0px,#0005ff 80px,#2500ff 160px,#5700ff 240px,#9000ff 320px,#cf00ff 400px,#dc00ff 416px)"></i><i style="left:172px;top:510px;width:412px;background:linear-gradient(90deg,#000fff 0px,#0005ff 80px,#2500ff 160px,#5700ff 240px,#9000ff 320px,#cf00ff 400px,#d800ff 412px)"></i><i style="left:174px;top:513px;width:407px;background:linear-gradient(90deg,#000eff 0px,#0004ff 80px,#2600ff 160px,#5700ff 240px,#9000ff 320px,#ce00ff 400px,#d500ff 408px)"></i><i style="left:176px;top:516px;width:402px;background:linear-gradient(90deg,#000eff 0px,#0004ff 80px,#2600ff 160px,#5700ff 240px,#9000ff 320px,#ce00ff 400px,#cf00ff 402px)"></i><i style="left:178px;top:519px;width:398px;background:linear-gradient(90deg,#000dff 0px,#0103ff 80px,#2700ff 160px,#5800ff 240px,#8f00ff 320px,#cb00ff 398px)"></i><i style="left:180px;top:522px;width:393px;background:linear-gradient(90deg,#000cff 0px,#0103ff 80px,#2700ff 160px,#5800ff 240px,#8f00ff 320px,#c800ff 394px)"></i><i style="left:182px;top:525px;width:389px;background:linear-gradient(90deg,#000cff 0px,#0202ff 80px,#2800ff 160px,#5800ff 240px,#8f00ff 320px,#c300ff 388px)"></i><i style="left:184px;top:528px;width:384px;background:linear-gradient(90deg,#000bff 0px,#0202ff 80px,#2800ff 160px,#5900ff 240px,#8f00ff 320px,#bf00ff 384px)"></i><i style="left:185px;top:531px;width:380px;background:linear-gradient(90deg,#000aff 0px,#0301ff 80px,#2900ff 160px,#5900ff 240px,#8f00ff 320px,#bc00ff 380px)"></i><i style="left:187px;top:534px;width:375px;background:linear-gradient(90deg,#000aff 0px,#0301ff 80px,#2900ff 160px,#5900ff 240px,#8f00ff 320px,#b800ff 376px)"></i><i style="left:189px;top:537px;width:370px;background:linear-gradient(90deg,#0009ff 0px,#0400ff 80px,#2a00ff 160px,#5900ff 240px,#8f00ff 320px,#b400ff 370px)"></i><i style="left:191px;top:540px;width:366px;background:linear-gradient(90deg,#0008ff 0px,#0400ff 80px,#2a00ff 160px,#5a00ff 240px,#8f00ff 320px,#b100ff 366px)"></i><i style="left:193px;top:543px;width:361px;background:linear-gradient(90deg,#0008ff 0px,#0500ff 80px,#2b00ff 160px,#5a00ff 240px,#8f00ff 320px,#ad00ff 362px)"></i><i style="left:195px;top:546px;width:357px;background:linear-gradient(90deg,#0007ff 0px,#0500ff 80px,#2c00ff 160px,#5a00ff 240px,#8f00ff 320px,#a900ff 356px)"></i><i style="left:197px;top:549px;width:352px;background:linear-gradient(90deg,#0007ff 0px,#0600ff 80px,#2c00ff 160px,#5b00ff 240px,#8f00ff 320px,#a600ff 352px)"></i><i style="left:199px;top:552px;width:347px;background:linear-gradient(90deg,#0006ff 0px,#0600ff 80px,#2d00ff 160px,#5b00ff 240px,#8f00ff 320px,#a300ff 348px)"></i><i style="left:202px;top:555px;width:343px;background:linear-gradient(90deg,#0005ff 0px,#0600ff 78px,#2c00ff 158px,#5a00ff 238px,#8e00ff 318px,#9f00ff 342px)"></i><i style="left:204px;top:558px;width:338px;background:linear-gradient(90deg,#0005ff 0px,#0700ff 78px,#2d00ff 158px,#5b00ff 238px,#8e00ff 318px,#9c00ff 338px)"></i><i style="left:206px;top:561px;width:333px;background:linear-gradient(90deg,#0004ff 0px,#0700ff 76px,#2c00ff 156px,#5a00ff 236px,#8d00ff 316px,#9900ff 334px)"></i><i style="left:208px;top:564px;width:328px;background:linear-gradient(90deg,#0004ff 0px,#0600ff 74px,#2c00ff 154px,#5900ff 234px,#8c00ff 314px,#9500ff 328px)"></i><i style="left:210px;top:567px;width:324px;background:linear-gradient(90deg,#0003ff 0px,#0700ff 74px,#2c00ff 154px,#5900ff 234px,#8c00ff 314px,#9200ff 324px)"></i><i style="left:212px;top:570px;width:319px;background:linear-gradient(90deg,#0003ff 0px,#0700ff 72px,#2c00ff 152px,#5800ff 232px,#8b00ff 312px,#8f00ff 318px)"></i><i style="left:214px;top:573px;width:314px;background:linear-gradient(90deg,#0002ff 0px,#0700ff 70px,#2b00ff 150px,#5800ff 230px,#8900ff 310px,#8c00ff 314px)"></i><i style="left:216px;top:576px;width:309px;background:linear-gradient(90deg,#0002ff 0px,#0700ff 70px,#2c00ff 150px,#5800ff 230px,#8a00ff 310px)"></i><i style="left:219px;top:579px;width:304px;background:linear-gradient(90deg,#0002ff 0px,#0700ff 68px,#2b00ff 148px,#5700ff 228px,#8600ff 304px)"></i><i style="left:221px;top:582px;width:300px;background:linear-gradient(90deg,#0001ff 0px,#0800ff 68px,#2c00ff 148px,#5800ff 228px,#8300ff 300px)"></i><i style="left:223px;top:585px;width:295px;background:linear-gradient(90deg,#0001ff 0px,#0800ff 66px,#2c00ff 146px,#5700ff 226px,#8000ff 294px)"></i><i style="left:225px;top:588px;width:290px;background:linear-gradient(90deg,#0000ff 0px,#0800ff 64px,#2b00ff 144px,#5600ff 224px,#7e00ff 290px)"></i><i style="left:227px;top:591px;width:285px;background:linear-gradient(90deg,#0000ff 0px,#0800ff 64px,#2c00ff 144px,#5700ff 224px,#7b00ff 286px)"></i><i style="left:230px;top:594px;width:280px;background:linear-gradient(90deg,#0000ff 0px,#0900ff 64px,#2c00ff 144px,#5700ff 224px,#7800ff 280px)"></i><i style="left:232px;top:597px;width:275px;background:linear-gradient(90deg,#0000ff 0px,#0900ff 62px,#2c00ff 142px,#5700ff 222px,#7600ff 276px)"></i><i style="left:234px;top:600px;width:270px;background:linear-gradient(90deg,#0000ff 0px,#0900ff 62px,#2d00ff 142px,#5700ff 222px,#7300ff 270px)"></i><i style="left:237px;top:603px;width:265px;background:linear-gradient(90deg,#0000ff 0px,#0a00ff 62px,#2d00ff 142px,#5700ff 222px,#7100ff 266px)"></i><i style="left:239px;top:606px;width:260px;background:linear-gradient(90deg,#0000ff 0px,#0b00ff 62px,#2e00ff 142px,#5800ff 222px,#6e00ff 260px)"></i><i style="left:241px;top:609px;width:255px;background:linear-gradient(90deg,#0000ff 0px,#0b00ff 62px,#2f00ff 142px,#5900ff 222px,#6c00ff 256px)"></i><i style="left:244px;top:612px;width:250px;background:linear-gradient(90deg,#0000ff 0px,#0c00ff 62px,#2f00ff 142px,#5900ff 222px,#6900ff 250px)"></i><i style="left:246px;top:615px;width:245px;background:linear-gradient(90deg,#0000ff 0px,#0e00ff 64px,#3100ff 144px,#5b00ff 224px,#6700ff 246px)"></i><i style="left:249px;top:618px;width:240px;background:linear-gradient(90deg,#0000ff 0px,#1000ff 68px,#3400ff 148px,#5d00ff 228px,#6400ff 240px)"></i><i style="left:251px;top:621px;width:235px;background:linear-gradient(90deg,#0000ff 0px,#1300ff 74px,#3700ff 154px,#6100ff 234px)"></i><i style="left:254px;top:624px;width:229px;background:linear-gradient(90deg,#0000ff 0px,#1600ff 80px,#3b00ff 160px,#6000ff 230px)"></i><i style="left:257px;top:627px;width:224px;background:linear-gradient(90deg,#0000ff 0px,#1700ff 80px,#3c00ff 160px,#5d00ff 224px)"></i><i style="left:259px;top:630px;width:219px;background:linear-gradient(90deg,#0000ff 0px,#1800ff 80px,#3c00ff 160px,#5a00ff 218px)"></i><i style="left:262px;top:633px;width:214px;background:linear-gradient(90deg,#0000ff 0px,#1900ff 80px,#3d00ff 160px,#5900ff 214px)"></i><i style="left:265px;top:636px;width:208px;background:linear-gradient(90deg,#0000ff 0px,#1900ff 80px,#3e00ff 160px,#5600ff 208px)"></i><i style="left:268px;top:639px;width:203px;background:linear-gradient(90deg,#0000ff 0px,#1a00ff 80px,#3f00ff 160px,#5400ff 202px)"></i><i style="left:270px;top:642px;width:197px;background:linear-gradient(90deg,#0000ff 0px,#1b00ff 80px,#4000ff 160px,#5300ff 198px)"></i><i style="left:273px;top:645px;width:192px;background:linear-gradient(90deg,#0000ff 0px,#1c00ff 80px,#4000ff 160px,#5000ff 192px)"></i><i style="left:276px;top:648px;width:186px;background:linear-gradient(90deg,#0000ff 0px,#1d00ff 80px,#4100ff 160px,#4e00ff 186px)"></i><i style="left:279px;top:651px;width:181px;background:linear-gradient(90deg,#0100ff 0px,#1e00ff 80px,#4200ff 160px,#4c00ff 180px)"></i><i style="left:282px;top:654px;width:175px;background:linear-gradient(90deg,#0200ff 0px,#1f00ff 80px,#4300ff 160px,#4a00ff 174px)"></i><i style="left:285px;top:657px;width:169px;background:linear-gradient(90deg,#0200ff 0px,#1f00ff 80px,#4400ff 160px,#4900ff 170px)"></i><i style="left:288px;top:660px;width:164px;background:linear-gradient(90deg,#0300ff 0px,#2000ff 80px,#4500ff 160px,#4600ff 164px)"></i><i style="left:291px;top:663px;width:158px;background:linear-gradient(90deg,#0400ff 0px,#2100ff 80px,#4400ff 158px)"></i><i style="left:295px;top:666px;width:152px;background:linear-gradient(90deg,#0500ff 0px,#2200ff 80px,#4300ff 152px)"></i><i style="left:298px;top:669px;width:146px;background:linear-gradient(90deg,#0500ff 0px,#2300ff 80px,#4100ff 146px)"></i><i style="left:301px;top:672px;width:140px;background:linear-gradient(90deg,#0600ff 0px,#2400ff 80px,#3f00ff 140px)"></i><i style="left:304px;top:675px;width:134px;background:linear-gradient(90deg,#0700ff 0px,#2500ff 80px,#3d00ff 134px)"></i><i style="left:308px;top:678px;width:128px;background:linear-gradient(90deg,#0800ff 0px,#2600ff 80px,#3b00ff 128px)"></i><i style="left:311px;top:681px;width:123px;background:linear-gradient(90deg,#0900ff 0px,#2700ff 80px,#3900ff 122px)"></i><i style="left:314px;top:684px;width:117px;background:linear-gradient(90deg,#0a00ff 0px,#2800ff 80px,#3800ff 116px)"></i><i style="left:318px;top:687px;width:111px;background:linear-gradient(90deg,#0b00ff 0px,#2900ff 80px,#3600ff 110px)"></i><i style="left:321px;top:690px;width:105px;background:linear-gradient(90deg,#0b00ff 0px,#2a00ff 80px,#3400ff 104px)"></i><i style="left:324px;top:693px;width:99px;background:linear-gradient(90deg,#0c00ff 0px,#2b00ff 80px,#3300ff 98px)"></i><i style="left:328px;top:696px;width:93px;background:linear-gradient(90deg,#0d00ff 0px,#2c00ff 80px,#3100ff 92px)"></i><i style="left:331px;top:699px;width:87px;background:linear-gradient(90deg,#0e00ff 0px,#2d00ff 80px,#2f00ff 86px)"></i><i style="left:334px;top:702px;width:81px;background:linear-gradient(90deg,#0f00ff 0px,#2e00ff 80px)"></i><i style="left:337px;top:705px;width:75px;background:linear-gradient(90deg,#1000ff 0px,#2c00ff 74px)"></i><i style="left:341px;top:708px;width:69px;background:linear-gradient(90deg,#1100ff 0px,#2c00ff 70px)"></i><i style="left:344px;top:711px;width:63px;background:linear-gradient(90deg,#1200ff 0px,#2a00ff 64px)"></i><i style="left:347px;top:714px;width:57px;background:linear-gradient(90deg,#1300ff 0px,#2800ff 58px)"></i><i style="left:350px;top:717px;width:52px;background:linear-gradient(90deg,#1300ff 0px,#2700ff 52px)"></i><i style="left:354px;top:720px;width:46px;background:linear-gradient(90deg,#1400ff 0px,#2600ff 46px)"></i><i style="left:357px;top:723px;width:40px;background:linear-gradient(90deg,#1500ff 0px,#2400ff 40px)"></i><i style="left:360px;top:726px;width:34px;background:linear-gradient(90deg,#1600ff 0px,#2300ff 34px)"></i><i style="left:364px;top:729px;width:27px;background:linear-gradient(90deg,#1700ff 0px,#2200ff 28px)"></i><i style="left:368px;top:732px;width:21px;background:linear-gradient(90deg,#1800ff 0px,#2000ff 20px)"></i><div class="a" style="left:134px;top:2px;width:320px;height:320px;background:radial-gradient(circle closest-side at 50% 50%,rgba(255,255,255,.34) 0,rgba(255,255,255,.2) 28%,rgba(255,255,255,.07) 62%,rgba(255,255,255,0) 100%)"></div><svg class="a" style="left:0;top:0" width="938" height="755"><path d="M381.7 734.6 L380.2 735.1 L378.2 735.3 L376.3 734.9 L374.8 734.1 L373.4 733.1 L371.8 732.0 L370.0 730.5 L368.0 728.9 L366.9 727.9 L365.7 726.9 L364.4 725.7 L362.9 724.5 L361.5 723.2 L359.9 721.8 L358.2 720.3 L356.5 718.7 L354.7 717.0 L352.8 715.2 L350.9 713.4 L348.8 711.4 L346.6 709.4 L344.3 707.3 L341.9 705.1 L339.4 702.8 L336.7 700.4 L333.9 697.8 L330.9 695.1 L327.7 692.3 L324.4 689.3 L321.0 686.2 L317.5 683.0 L313.8 679.7 L310.0 676.2 L306.0 672.5 L301.9 668.7 L297.6 664.6 L293.1 660.3 L288.4 655.7 L283.6 650.8 L278.6 645.7 L273.5 640.4 L268.2 634.7 L262.7 628.6 L256.9 621.9 L250.8 614.6 L244.2 606.4 L237.1 597.4 L229.7 587.5 L221.8 576.8 L213.7 565.4 L205.4 553.4 L196.8 540.7 L188.0 527.2 L179.0 513.1 L169.9 498.2 L160.5 482.6 L151.0 466.3 L141.5 449.5 L131.9 432.3 L122.4 414.7 L112.9 396.9 L103.5 378.9 L94.2 360.8 L85.3 342.5 L76.7 324.3 L68.6 306.3 L61.0 288.6 L53.9 271.2 L47.2 254.2 L40.9 237.6 L35.1 221.6 L29.8 206.3 L24.9 191.6 L20.6 177.6 L16.7 164.5 L13.3 152.1 L10.4 140.5 L7.9 129.7 L5.8 119.6 L4.2 110.1 L2.8 101.3 L1.9 93.2 L1.3 85.7 L1.0 78.7 L1.1 72.3 L1.5 66.3 L2.2 60.6 L3.1 55.5 L4.4 50.7 L5.9 46.3 L7.7 42.3 L9.8 38.6 L12.1 35.3 L14.6 32.3 L17.3 29.8 L20.2 27.5 L23.3 25.6 L26.5 23.9 L29.9 22.5 L33.4 21.3 L37.1 20.4 L40.8 19.6 L44.7 19.1 L48.6 18.6 L52.6 18.2 L56.7 17.9 L60.9 17.7 L65.1 17.6 L69.4 17.5 L73.6 17.5 L77.8 17.5 L82.0 17.5 L86.3 17.5 L90.5 17.6 L94.8 17.7 L99.2 17.9 L103.6 18.1 L108.0 18.3 L112.5 18.6 L117.1 18.9 L121.7 19.2 L126.4 19.6 L131.2 19.9 L136.0 20.3 L140.9 20.8 L145.9 21.2 L151.0 21.7 L156.2 22.2 L161.5 22.8 L166.9 23.3 L172.4 23.9 L178.0 24.5 L183.7 25.2 L189.6 25.8 L195.5 26.5 L201.6 27.2 L207.8 27.9 L214.1 28.7 L220.6 29.5 L227.1 30.2 L233.9 31.1 L240.7 31.9 L247.7 32.7 L254.8 33.6 L262.1 34.5 L269.6 35.4 L277.2 36.4 L284.9 37.3 L292.8 38.3 L300.8 39.3 L309.0 40.4 L317.4 41.4 L325.9 42.5 L334.6 43.6 L343.4 44.7 L352.4 45.8 L361.6 47.0 L370.9 48.1 L380.3 49.3 L389.9 50.6 L399.6 51.8 L409.5 53.0 L419.5 54.3 L429.7 55.6 L439.9 56.9 L450.3 58.2 L460.8 59.5 L471.4 60.8 L482.1 62.2 L492.9 63.5 L503.8 64.9 L514.7 66.3 L525.7 67.7 L536.6 69.1 L547.4 70.4 L558.2 71.8 L568.8 73.1 L579.3 74.4 L589.8 75.8 L600.2 77.1 L610.7 78.4 L621.1 79.7 L631.4 81.0 L641.6 82.3 L651.6 83.6 L661.3 84.8 L670.8 86.0 L680.1 87.1 L689.1 88.3 L698.0 89.4 L706.7 90.5 L715.1 91.5 L723.3 92.6 L731.3 93.6 L739.1 94.6 L746.6 95.5 L753.8 96.4 L760.8 97.3 L767.6 98.2 L774.1 99.0 L780.4 99.8 L786.5 100.5 L792.4 101.3 L798.0 102.0 L803.5 102.7 L808.8 103.3 L813.8 104.0 L818.7 104.6 L823.5 105.2 L828.2 105.8 L832.7 106.4 L837.1 106.9 L841.4 107.5 L845.6 108.0 L849.6 108.5 L853.5 109.0 L857.2 109.5 L860.9 109.9 L864.3 110.4 L867.7 110.8 L870.9 111.2 L874.0 111.6 L877.0 112.0 L879.9 112.3 L882.5 112.7 L885.0 113.0 L887.4 113.3 L889.6 113.6 L891.7 113.8 L893.7 114.1 L895.6 114.3 L897.5 114.5 L900.9 115.0 L904.0 115.4 L906.7 115.7 L909.1 116.0 L911.1 116.3 L913.5 116.6 L915.7 116.8 L917.7 117.1 L919.9 117.4 L922.2 117.7 L923.2 117.8Z M828.3 105.8 L81.8 17.4 L236.4 597.1Z" fill="#000" fill-opacity="0.41" fill-rule="evenodd"/></svg></div>
<div class="a" style="left:1582px;top:183px;width:942px;height:759px;box-sizing:border-box;border:2px solid #999;"></div>
<div class="a" style="left:1574px;top:939.3px;width:8px;height:2px;background:#ddd;"></div><div class="a" style="left:1574px;top:876.4px;width:8px;height:2px;background:#ddd;"></div><div class="a" style="left:1574px;top:813.5px;width:8px;height:2px;background:#ddd;"></div><div class="a" style="left:1574px;top:750.7px;width:8px;height:2px;background:#ddd;"></div><div class="a" style="left:1574px;top:687.8px;width:8px;height:2px;background:#ddd;"></div><div class="a" style="left:1574px;top:624.9px;width:8px;height:2px;background:#ddd;"></div><div class="a" style="left:1574px;top:562.0px;width:8px;height:2px;background:#ddd;"></div><div class="a" style="left:1574px;top:499.2px;width:8px;height:2px;background:#ddd;"></div><div class="a" style="left:1574px;top:436.3px;width:8px;height:2px;background:#ddd;"></div><div class="a" style="left:1574px;top:373.4px;width:8px;height:2px;background:#ddd;"></div><div class="a" style="left:1574px;top:310.5px;width:8px;height:2px;background:#ddd;"></div><div class="a" style="left:1574px;top:247.7px;width:8px;height:2px;background:#ddd;"></div><div class="a" style="left:1582.0px;top:942px;width:2px;height:8px;background:#ddd;"></div><div class="a" style="left:1656.5px;top:942px;width:2px;height:8px;background:#ddd;"></div><div class="a" style="left:1731.0px;top:942px;width:2px;height:8px;background:#ddd;"></div><div class="a" style="left:1805.5px;top:942px;width:2px;height:8px;background:#ddd;"></div><div class="a" style="left:1880.0px;top:942px;width:2px;height:8px;background:#ddd;"></div><div class="a" style="left:1954.5px;top:942px;width:2px;height:8px;background:#ddd;"></div><div class="a" style="left:2029.0px;top:942px;width:2px;height:8px;background:#ddd;"></div><div class="a" style="left:2103.5px;top:942px;width:2px;height:8px;background:#ddd;"></div><div class="a" style="left:2178.0px;top:942px;width:2px;height:8px;background:#ddd;"></div><div class="a" style="left:2252.5px;top:942px;width:2px;height:8px;background:#ddd;"></div><div class="a" style="left:2327.0px;top:942px;width:2px;height:8px;background:#ddd;"></div><div class="a" style="left:2401.5px;top:942px;width:2px;height:8px;background:#ddd;"></div><div class="a" style="left:2476.0px;top:942px;width:2px;height:8px;background:#ddd;"></div>
<svg class="a" style="left:0;top:0" width="2560" height="1000"><rect x="1867.2" y="337.6" width="20.8" height="20.8" fill="none" stroke="#000" stroke-width="2.2"/><rect x="1946.4" y="298.5" width="20.8" height="20.8" fill="none" stroke="#fff" stroke-width="2.2"/><rect x="1919.8" y="307.8" width="20.8" height="20.8" fill="none" stroke="#fff" stroke-width="2.2"/><rect x="1835.3" y="400.8" width="20.8" height="20.8" fill="none" stroke="#fff" stroke-width="2.2"/><rect x="1843.0" y="274.8" width="20.8" height="20.8" fill="none" stroke="#fff" stroke-width="2.2"/><rect x="1862.4" y="409.1" width="20.8" height="20.8" fill="none" stroke="#fff" stroke-width="2.2"/><rect x="1803.0" y="328.1" width="20.8" height="20.8" fill="none" stroke="#fff" stroke-width="2.2"/><rect x="2011.3" y="252.3" width="20.8" height="20.8" fill="none" stroke="#fff" stroke-width="2.2"/><rect x="1838.9" y="491.9" width="20.8" height="20.8" fill="none" stroke="#fff" stroke-width="2.2"/><rect x="2043.4" y="320.7" width="20.8" height="20.8" fill="none" stroke="#fff" stroke-width="2.2"/><rect x="1916.5" y="438.0" width="20.8" height="20.8" fill="none" stroke="#fff" stroke-width="2.2"/><rect x="1843.9" y="239.6" width="20.8" height="20.8" fill="none" stroke="#fff" stroke-width="2.2"/><rect x="1955.1" y="244.8" width="20.8" height="20.8" fill="none" stroke="#fff" stroke-width="2.2"/><rect x="1836.8" y="566.5" width="20.8" height="20.8" fill="none" stroke="#fff" stroke-width="2.2"/><rect x="1792.9" y="252.7" width="20.8" height="20.8" fill="none" stroke="#fff" stroke-width="2.2"/><rect x="2140.6" y="296.9" width="20.8" height="20.8" fill="none" stroke="#fff" stroke-width="2.2"/><rect x="1919.5" y="238.8" width="20.8" height="20.8" fill="none" stroke="#fff" stroke-width="2.2"/><rect x="2003.3" y="399.3" width="20.8" height="20.8" fill="none" stroke="#fff" stroke-width="2.2"/><rect x="1771.1" y="403.3" width="20.8" height="20.8" fill="none" stroke="#fff" stroke-width="2.2"/><circle cx="1875.9" cy="350.4" r="6.5" fill="#767676" stroke="#0a0a0a" stroke-width="1.6"/><circle cx="1876.9" cy="349.5" r="6.5" fill="#727272" stroke="#0a0a0a" stroke-width="1.6"/><circle cx="1876.2" cy="349.5" r="6.5" fill="#6b6b6b" stroke="#0a0a0a" stroke-width="1.6"/><circle cx="1876.2" cy="349.1" r="6.5" fill="#646464" stroke="#0a0a0a" stroke-width="1.6"/><circle cx="1877.2" cy="351.8" r="6.5" fill="#6e6e6e" stroke="#0a0a0a" stroke-width="1.6"/><circle cx="1946.2" cy="307.0" r="6.5" fill="#524e3f" stroke="#0a0a0a" stroke-width="1.6"/><circle cx="1922.1" cy="316.8" r="6.5" fill="#6c635e" stroke="#0a0a0a" stroke-width="1.6"/><circle cx="1844.9" cy="412.4" r="6.5" fill="#565c6c" stroke="#0a0a0a" stroke-width="1.6"/><circle cx="1853.8" cy="283.0" r="6.5" fill="#525444" stroke="#0a0a0a" stroke-width="1.6"/><circle cx="1869.8" cy="419.4" r="6.5" fill="#585b6c" stroke="#0a0a0a" stroke-width="1.6"/><circle cx="1821.9" cy="339.0" r="6.5" fill="#5d6d68" stroke="#0a0a0a" stroke-width="1.6"/><circle cx="2004.7" cy="258.6" r="6.5" fill="#6f5e3f" stroke="#0a0a0a" stroke-width="1.6"/><circle cx="1849.3" cy="505.4" r="6.5" fill="#484a65" stroke="#0a0a0a" stroke-width="1.6"/><circle cx="2050.2" cy="328.8" r="6.5" fill="#675050" stroke="#0a0a0a" stroke-width="1.6"/><circle cx="1926.9" cy="452.1" r="6.5" fill="#4a3f50" stroke="#0a0a0a" stroke-width="1.6"/><circle cx="1858.1" cy="251.6" r="6.5" fill="#656c4b" stroke="#0a0a0a" stroke-width="1.6"/><circle cx="1955.4" cy="253.1" r="6.5" fill="#726a46" stroke="#0a0a0a" stroke-width="1.6"/><circle cx="1850.0" cy="579.5" r="6.5" fill="#3e4161" stroke="#0a0a0a" stroke-width="1.6"/><circle cx="1800.0" cy="258.2" r="6.5" fill="#506148" stroke="#0a0a0a" stroke-width="1.6"/><circle cx="2152.5" cy="302.7" r="6.5" fill="#63433c" stroke="#0a0a0a" stroke-width="1.6"/><circle cx="1929.9" cy="248.9" r="6.5" fill="#746c46" stroke="#0a0a0a" stroke-width="1.6"/><circle cx="2003.4" cy="411.7" r="6.5" fill="#654d63" stroke="#0a0a0a" stroke-width="1.6"/><circle cx="1783.9" cy="409.6" r="6.5" fill="#455961" stroke="#0a0a0a" stroke-width="1.6"/></svg>
<div class="a" style="left:2058px;top:879px;width:459px;height:53px;background:#2c2c2c;"></div>
<div class="a" style="left:22px;top:995px;width:2516px;height:347px;background:#000;"></div>
<div class="a" style="left:24px;top:997px;width:2512px;height:43px;background:linear-gradient(#2b2b2b 0%,#303030 48%,#161616 52%,#111 100%);"></div>
<div class="a" style="left:24px;top:1039.4px;width:2512px;height:39.6px;background:#434343;"></div><div class="a" style="left:24px;top:1079.0px;width:2512px;height:39.6px;background:#808080;"></div><div class="a" style="left:24px;top:1118.6px;width:2512px;height:39.6px;background:#434343;"></div><div class="a" style="left:24px;top:1158.2px;width:2512px;height:39.6px;background:#808080;"></div><div class="a" style="left:24px;top:1197.8px;width:2512px;height:39.6px;background:#434343;"></div><div class="a" style="left:24px;top:1237.4px;width:2512px;height:39.6px;background:#808080;"></div><div class="a" style="left:24px;top:1277.0px;width:2512px;height:39.6px;background:#434343;"></div>
<div class="a" style="left:24px;top:1316.6px;width:2512px;height:24.4px;background:#464646;"></div>
<div class="a" style="left:51px;top:1318px;width:2221px;height:21px;border-radius:10px;background:#595959;"></div>
<div class="a" style="left:26px;top:1318.5px;width:20px;height:20px;border-radius:4px;background:#707070;"></div><svg class="a" style="left:31px;top:1322px" width="10" height="13"><path d="M9 0.5v12l-8-6z" fill="#3a3a3a"/></svg>
<div class="a" style="left:2513px;top:1318.5px;width:21px;height:20px;border-radius:4px;background:#707070;"></div><svg class="a" style="left:2519px;top:1322px" width="10" height="13"><path d="M1 0.5v12l8-6z" fill="#3a3a3a"/></svg>
<div class="a" style="left:2536px;top:995px;width:2px;height:347px;background:#000;z-index:5"></div>
<div class="a" style="left:2538px;top:990px;width:22px;height:356px;background:#2f2f2f;z-index:5"></div>
<div class="a" style="left:2555px;top:88px;width:5px;height:1290px;background:#282828;z-index:6"></div>
<div class="a" style="left:0;top:88px;width:2px;height:1352px;background:#282828;z-index:6"></div>
<div class="a" style="left:1.3px;top:1378px;width:95.3px;height:60.7px;border-radius:5px 5px 4px 4px;box-sizing:border-box;background:linear-gradient(#909090 0%,#7e7e7e 45%,#5a5a5a 100%);border:1px solid #9a9a9a;border-bottom-color:#4a4a4a;border-right-color:#666;"></div><div class="a" style="left:6.2px;top:1383.2px;width:85.4px;height:36px;border-radius:4px;box-sizing:border-box;background:#ffffff;border:1px solid #e8e8e8;"></div><div class="a" style="left:98.5px;top:1378px;width:95.3px;height:60.7px;border-radius:5px 5px 4px 4px;box-sizing:border-box;background:linear-gradient(#909090 0%,#7e7e7e 45%,#5a5a5a 100%);border:1px solid #9a9a9a;border-bottom-color:#4a4a4a;border-right-color:#666;"></div><div class="a" style="left:103.4px;top:1383.2px;width:85.4px;height:36px;border-radius:4px;box-sizing:border-box;background:#808080;border:1px solid #6a6a6a;"></div><div class="a" style="left:195.7px;top:1378px;width:95.3px;height:60.7px;border-radius:5px 5px 4px 4px;box-sizing:border-box;background:linear-gradient(#909090 0%,#7e7e7e 45%,#5a5a5a 100%);border:1px solid #9a9a9a;border-bottom-color:#4a4a4a;border-right-color:#666;"></div><div class="a" style="left:200.6px;top:1383.2px;width:85.4px;height:36px;border-radius:4px;box-sizing:border-box;background:#7c7c7c;border:1px solid #676767;"></div><div class="a" style="left:292.8px;top:1378px;width:95.3px;height:60.7px;border-radius:5px 5px 4px 4px;box-sizing:border-box;background:linear-gradient(#909090 0%,#7e7e7e 45%,#5a5a5a 100%);border:1px solid #9a9a9a;border-bottom-color:#4a4a4a;border-right-color:#666;"></div><div class="a" style="left:297.7px;top:1383.2px;width:85.4px;height:36px;border-radius:4px;box-sizing:border-box;background:#737373;border:1px solid #606060;"></div><div class="a" style="left:390.0px;top:1378px;width:95.3px;height:60.7px;border-radius:5px 5px 4px 4px;box-sizing:border-box;background:linear-gradient(#909090 0%,#7e7e7e 45%,#5a5a5a 100%);border:1px solid #9a9a9a;border-bottom-color:#4a4a4a;border-right-color:#666;"></div><div class="a" style="left:394.9px;top:1383.2px;width:85.4px;height:36px;border-radius:4px;box-sizing:border-box;background:#6b6b6b;border:1px solid #5a5a5a;"></div><div class="a" style="left:487.2px;top:1378px;width:95.3px;height:60.7px;border-radius:5px 5px 4px 4px;box-sizing:border-box;background:linear-gradient(#909090 0%,#7e7e7e 45%,#5a5a5a 100%);border:1px solid #9a9a9a;border-bottom-color:#4a4a4a;border-right-color:#666;"></div><div class="a" style="left:492.1px;top:1383.2px;width:85.4px;height:36px;border-radius:4px;box-sizing:border-box;background:#565140;border:1px solid #4a473a;"></div><div class="a" style="left:584.4px;top:1378px;width:95.3px;height:60.7px;border-radius:5px 5px 4px 4px;box-sizing:border-box;background:linear-gradient(#909090 0%,#7e7e7e 45%,#5a5a5a 100%);border:1px solid #9a9a9a;border-bottom-color:#4a4a4a;border-right-color:#666;"></div><div class="a" style="left:589.3px;top:1383.2px;width:85.4px;height:36px;border-radius:4px;box-sizing:border-box;background:#756a64;border:1px solid #625a55;"></div><div class="a" style="left:681.6px;top:1378px;width:95.3px;height:60.7px;border-radius:5px 5px 4px 4px;box-sizing:border-box;background:linear-gradient(#909090 0%,#7e7e7e 45%,#5a5a5a 100%);border:1px solid #9a9a9a;border-bottom-color:#4a4a4a;border-right-color:#666;"></div><div class="a" style="left:686.5px;top:1383.2px;width:85.4px;height:36px;border-radius:4px;box-sizing:border-box;background:#5a6274;border:1px solid #4e5461;"></div><div class="a" style="left:778.7px;top:1378px;width:95.3px;height:60.7px;border-radius:5px 5px 4px 4px;box-sizing:border-box;background:linear-gradient(#909090 0%,#7e7e7e 45%,#5a5a5a 100%);border:1px solid #9a9a9a;border-bottom-color:#4a4a4a;border-right-color:#666;"></div><div class="a" style="left:783.6px;top:1383.2px;width:85.4px;height:36px;border-radius:4px;box-sizing:border-box;background:#565846;border:1px solid #4a4c3e;"></div><div class="a" style="left:875.9px;top:1378px;width:95.3px;height:60.7px;border-radius:5px 5px 4px 4px;box-sizing:border-box;background:linear-gradient(#909090 0%,#7e7e7e 45%,#5a5a5a 100%);border:1px solid #9a9a9a;border-bottom-color:#4a4a4a;border-right-color:#666;"></div><div class="a" style="left:880.8px;top:1383.2px;width:85.4px;height:36px;border-radius:4px;box-sizing:border-box;background:#5d6074;border:1px solid #505261;"></div><div class="a" style="left:973.1px;top:1378px;width:95.3px;height:60.7px;border-radius:5px 5px 4px 4px;box-sizing:border-box;background:linear-gradient(#909090 0%,#7e7e7e 45%,#5a5a5a 100%);border:1px solid #9a9a9a;border-bottom-color:#4a4a4a;border-right-color:#666;"></div><div class="a" style="left:978.0px;top:1383.2px;width:85.4px;height:36px;border-radius:4px;box-sizing:border-box;background:#637670;border:1px solid #54625e;"></div><div class="a" style="left:1070.3px;top:1378px;width:95.3px;height:60.7px;border-radius:5px 5px 4px 4px;box-sizing:border-box;background:linear-gradient(#909090 0%,#7e7e7e 45%,#5a5a5a 100%);border:1px solid #9a9a9a;border-bottom-color:#4a4a4a;border-right-color:#666;"></div><div class="a" style="left:1075.2px;top:1383.2px;width:85.4px;height:36px;border-radius:4px;box-sizing:border-box;background:#786440;border:1px solid #64553a;"></div><div class="a" style="left:1167.5px;top:1378px;width:95.3px;height:60.7px;border-radius:5px 5px 4px 4px;box-sizing:border-box;background:linear-gradient(#909090 0%,#7e7e7e 45%,#5a5a5a 100%);border:1px solid #9a9a9a;border-bottom-color:#4a4a4a;border-right-color:#666;"></div><div class="a" style="left:1172.4px;top:1383.2px;width:85.4px;height:36px;border-radius:4px;box-sizing:border-box;background:#4a4c6c;border:1px solid #42435b;"></div><div class="a" style="left:1264.6px;top:1378px;width:95.3px;height:60.7px;border-radius:5px 5px 4px 4px;box-sizing:border-box;background:linear-gradient(#909090 0%,#7e7e7e 45%,#5a5a5a 100%);border:1px solid #9a9a9a;border-bottom-color:#4a4a4a;border-right-color:#666;"></div><div class="a" style="left:1269.5px;top:1383.2px;width:85.4px;height:36px;border-radius:4px;box-sizing:border-box;background:#6f5454;border:1px solid #5d4949;"></div><div class="a" style="left:1361.8px;top:1378px;width:95.3px;height:60.7px;border-radius:5px 5px 4px 4px;box-sizing:border-box;background:linear-gradient(#909090 0%,#7e7e7e 45%,#5a5a5a 100%);border:1px solid #9a9a9a;border-bottom-color:#4a4a4a;border-right-color:#666;"></div><div class="a" style="left:1366.7px;top:1383.2px;width:85.4px;height:36px;border-radius:4px;box-sizing:border-box;background:#4c4054;border:1px solid #433a49;"></div><div class="a" style="left:1459.0px;top:1378px;width:95.3px;height:60.7px;border-radius:5px 5px 4px 4px;box-sizing:border-box;background:linear-gradient(#909090 0%,#7e7e7e 45%,#5a5a5a 100%);border:1px solid #9a9a9a;border-bottom-color:#4a4a4a;border-right-color:#666;"></div><div class="a" style="left:1463.9px;top:1383.2px;width:85.4px;height:36px;border-radius:4px;box-sizing:border-box;background:#6c744e;border:1px solid #5b6144;"></div><div class="a" style="left:1556.2px;top:1378px;width:95.3px;height:60.7px;border-radius:5px 5px 4px 4px;box-sizing:border-box;background:linear-gradient(#909090 0%,#7e7e7e 45%,#5a5a5a 100%);border:1px solid #9a9a9a;border-bottom-color:#4a4a4a;border-right-color:#666;"></div><div class="a" style="left:1561.1px;top:1383.2px;width:85.4px;height:36px;border-radius:4px;box-sizing:border-box;background:#7c7248;border:1px solid #676040;"></div><div class="a" style="left:1653.4px;top:1378px;width:95.3px;height:60.7px;border-radius:5px 5px 4px 4px;box-sizing:border-box;background:linear-gradient(#909090 0%,#7e7e7e 45%,#5a5a5a 100%);border:1px solid #9a9a9a;border-bottom-color:#4a4a4a;border-right-color:#666;"></div><div class="a" style="left:1658.3px;top:1383.2px;width:85.4px;height:36px;border-radius:4px;box-sizing:border-box;background:#3e4268;border:1px solid #383c58;"></div><div class="a" style="left:1750.5px;top:1378px;width:95.3px;height:60.7px;border-radius:5px 5px 4px 4px;box-sizing:border-box;background:linear-gradient(#909090 0%,#7e7e7e 45%,#5a5a5a 100%);border:1px solid #9a9a9a;border-bottom-color:#4a4a4a;border-right-color:#666;"></div><div class="a" style="left:1755.4px;top:1383.2px;width:85.4px;height:36px;border-radius:4px;box-sizing:border-box;background:#54684a;border:1px solid #495842;"></div><div class="a" style="left:1847.7px;top:1378px;width:95.3px;height:60.7px;border-radius:5px 5px 4px 4px;box-sizing:border-box;background:linear-gradient(#909090 0%,#7e7e7e 45%,#5a5a5a 100%);border:1px solid #9a9a9a;border-bottom-color:#4a4a4a;border-right-color:#666;"></div><div class="a" style="left:1852.6px;top:1383.2px;width:85.4px;height:36px;border-radius:4px;box-sizing:border-box;background:#6a443c;border:1px solid #5a3d37;"></div><div class="a" style="left:1944.9px;top:1378px;width:95.3px;height:60.7px;border-radius:5px 5px 4px 4px;box-sizing:border-box;background:linear-gradient(#909090 0%,#7e7e7e 45%,#5a5a5a 100%);border:1px solid #9a9a9a;border-bottom-color:#4a4a4a;border-right-color:#666;"></div><div class="a" style="left:1949.8px;top:1383.2px;width:85.4px;height:36px;border-radius:4px;box-sizing:border-box;background:#7e7448;border:1px solid #686140;"></div><div class="a" style="left:2042.1px;top:1378px;width:95.3px;height:60.7px;border-radius:5px 5px 4px 4px;box-sizing:border-box;background:linear-gradient(#909090 0%,#7e7e7e 45%,#5a5a5a 100%);border:1px solid #9a9a9a;border-bottom-color:#4a4a4a;border-right-color:#666;"></div><div class="a" style="left:2047.0px;top:1383.2px;width:85.4px;height:36px;border-radius:4px;box-sizing:border-box;background:#6c506a;border:1px solid #5b465a;"></div><div class="a" style="left:2139.3px;top:1378px;width:95.3px;height:60.7px;border-radius:5px 5px 4px 4px;box-sizing:border-box;background:#2a2a2a;border:1px solid #222;"></div><div class="a" style="left:2144.2px;top:1383.2px;width:85.4px;height:36px;border-radius:4px;box-sizing:border-box;background:#475e68;border:1px solid #3f5058;"></div>
<div class="a" style="left:2237.2px;top:1378px;width:47.6px;height:60.7px;border-radius:5px 5px 4px 4px;background:linear-gradient(#8c8c8c 0%,#7a7a7a 29%,#6e6e6e 30%,#707070 100%);border:1px solid #999;border-bottom:none;box-sizing:border-box"></div>
<div class="a" style="left:2238px;top:1395.5px;width:46.5px;height:1.5px;background:#4a4a4a"></div>
<div class="a" style="left:2253px;top:1379.5px;width:15px;height:15px;border-radius:50%;background:linear-gradient(#6a6a6a,#8a8a8a);"></div>
<svg class="a" style="left:2255.6px;top:1383.8px" width="10" height="6"><path d="M0 6h10l-5-6z" fill="#111"/></svg>
<div class="a" style="left:2245.5px;top:1402.3px;width:31px;height:30.5px;border-radius:4px;box-sizing:border-box;border:2.5px solid #111;background:linear-gradient(#343434 0%,#303030 48%,#1a1a1a 50%,#181818 100%);"></div>
<div class="a" style="left:2286px;top:1378px;width:46.6px;height:29.6px;background:linear-gradient(#949494 0%,#7e7e7e 50%,#5e5e5e 100%);box-sizing:border-box;border-left:1px solid #a0a0a0;border-right:1px solid #555;border-top:1px solid #a0a0a0;"></div><div class="a" style="left:2299.3px;top:1382.5px;width:20px;height:20px;border-radius:50%;background:linear-gradient(#6c6c6c,#929292);"></div><div class="a" style="left:2332.6px;top:1378px;width:44.7px;height:29.6px;background:linear-gradient(#949494 0%,#7e7e7e 50%,#5e5e5e 100%);box-sizing:border-box;border-left:1px solid #a0a0a0;border-right:1px solid #555;border-top:1px solid #a0a0a0;"></div><div class="a" style="left:2344.9px;top:1382.5px;width:20px;height:20px;border-radius:50%;background:linear-gradient(#6c6c6c,#929292);"></div><div class="a" style="left:2377.3px;top:1378px;width:44.9px;height:29.6px;background:linear-gradient(#949494 0%,#7e7e7e 50%,#5e5e5e 100%);box-sizing:border-box;border-left:1px solid #a0a0a0;border-right:1px solid #555;border-top:1px solid #a0a0a0;"></div><div class="a" style="left:2389.8px;top:1382.5px;width:20px;height:20px;border-radius:50%;background:linear-gradient(#6c6c6c,#929292);"></div><div class="a" style="left:2422.2px;top:1378px;width:44.7px;height:29.6px;background:linear-gradient(#949494 0%,#7e7e7e 50%,#5e5e5e 100%);box-sizing:border-box;border-left:1px solid #a0a0a0;border-right:1px solid #555;border-top:1px solid #a0a0a0;"></div><div class="a" style="left:2434.6px;top:1382.5px;width:20px;height:20px;border-radius:50%;background:linear-gradient(#6c6c6c,#929292);"></div><div class="a" style="left:2466.9px;top:1378px;width:45.5px;height:29.6px;background:linear-gradient(#404040 0%,#303030 100%);box-sizing:border-box;border-left:1px solid #3a3a3a;border-right:1px solid #333;border-top:1px solid #444;"></div><div class="a" style="left:2479.7px;top:1382.5px;width:20px;height:20px;border-radius:50%;background:linear-gradient(#383838,#4a4a4a);"></div><div class="a" style="left:2512.4px;top:1378px;width:44.6px;height:29.6px;background:linear-gradient(#404040 0%,#303030 100%);box-sizing:border-box;border-left:1px solid #3a3a3a;border-right:1px solid #333;border-top:1px solid #444;"></div><div class="a" style="left:2524.7px;top:1382.5px;width:20px;height:20px;border-radius:50%;background:linear-gradient(#383838,#4a4a4a);"></div>
<div class="a" style="left:2305.3px;top:1388.5px;width:8px;height:8px;background:#222"></div>
<svg class="a" style="left:2351.4px;top:1387.5px" width="9" height="10"><path d="M0 0v10l9-5z" fill="#222"/></svg>
<svg class="a" style="left:2393.8px;top:1387.8px" width="12" height="11" viewBox="0 0 12 11"><path d="M3.2 0.8H0.9V10.2H3.2M8.8 0.8H11.1V10.2H8.8" fill="none" stroke="#222" stroke-width="1.7"/><rect x="4.0" y="4.5" width="1.6" height="2" fill="#222"/><rect x="6.4" y="4.5" width="1.6" height="2" fill="#222"/></svg>
<svg class="a" style="left:2437.1px;top:1388.5px" width="15" height="8" viewBox="0 0 15 8"><path d="M7.5 4C6 1.6 4.6 1 3.4 1A2.6 3 0 0 0 3.4 7C4.6 7 6 6.4 7.5 4C9 1.6 10.4 1 11.6 1A2.6 3 0 0 1 11.6 7C10.4 7 9 6.4 7.5 4Z" fill="none" stroke="#222" stroke-width="1.7"/></svg>
<svg class="a" style="left:2482.7px;top:1385.5px" width="14" height="14" viewBox="-7 -7 14 14"><g fill="none" stroke="#1c1c1c" stroke-width="2.6"><path d="M-4.6 -1.5a4.8 4.8 0 0 1 8.6 -1.6"/><path d="M4.6 1.5a4.8 4.8 0 0 1 -8.6 1.6"/></g><path d="M6.2 -6v4.6h-4.6z M-6.2 6v-4.6h4.6z" fill="#1c1c1c"/></svg>
<div class="a" style="left:2286px;top:1408.8px;width:136.2px;height:29.9px;border-radius:4px 0 0 4px;background:linear-gradient(#a2a2a2 0%,#8a8a8a 40%,#666 100%);border-top:1px solid #b0b0b0;border-right:1px solid #555;box-sizing:border-box"></div>
<div class="a" style="left:2422.2px;top:1408.8px;width:135.8px;height:29.9px;border-radius:0 4px 4px 0;background:linear-gradient(#a2a2a2 0%,#8a8a8a 40%,#666 100%);border-top:1px solid #b0b0b0;border-left:1px solid #aaa;box-sizing:border-box"></div>
<div class="a" style="left:2306.5px;top:1414.7px;width:20px;height:20px;border-radius:50%;background:linear-gradient(#6e6e6e,#9a9a9a);"></div>
<div class="a" style="left:2520.8px;top:1414.7px;width:20px;height:20px;border-radius:50%;background:linear-gradient(#6e6e6e,#9a9a9a);"></div>
<span class="t" style="left:23.00px;top:5.89px;font-size:12.3px;line-height:12.3px;color:#1a1a1a;letter-spacing:-0.275px;">Calman 2025 Calman Ultimate for Business 318 Days Remaining  - Analysis/HDR Toolkit</span>
<span class="t" style="left:49.50px;top:25.57px;font-size:20.5px;line-height:20.5px;color:#fff;letter-spacing:0.077px;font-family:'DejaVu Sans',sans-serif;text-shadow:0 0 0.6px #fff;transform:scaleX(1.14);transform-origin:0 0;">calman</span>
<span class="t" style="left:99.79px;top:69.69px;font-size:11px;line-height:11px;color:#777;">+</span>
<span class="t" style="left:35.00px;top:67.09px;font-size:12.3px;line-height:12.3px;color:#ddd;letter-spacing:-0.189px;">History 1</span>
<span class="t" style="left:1868.50px;top:60.33px;font-size:10.6px;line-height:10.6px;color:#f0f0f0;letter-spacing:0.057px;">i1 Display Pro/Calibrite ColorChecker Display Plus (Retail)</span>
<span class="t" style="left:1868.50px;top:75.03px;font-size:10.6px;line-height:10.6px;color:#f0f0f0;letter-spacing:-0.121px;">Sony Bravia 5</span>
<span class="t" style="left:2188.50px;top:60.33px;font-size:10.6px;line-height:10.6px;color:#f0f0f0;letter-spacing:-0.036px;">SpectraCal VideoForge Pro</span>
<span class="t" style="left:2361.50px;top:60.33px;font-size:10.6px;line-height:10.6px;color:#f0f0f0;letter-spacing:0.146px;">Direct Display Control</span>
<span class="t" style="left:23.00px;top:148.94px;font-size:55px;line-height:55px;color:#f2f2f2;letter-spacing:-1.521px;">ColorChecker</span>
<span class="t" style="left:347.50px;top:153.21px;font-size:32px;line-height:32px;color:#f2f2f2;text-shadow:0 0 0.7px #f2f2f2;">®</span>
<span class="t" style="left:389.50px;top:148.94px;font-size:55px;line-height:55px;color:#f2f2f2;letter-spacing:-1.329px;">Analysis</span>
<span class="t" style="left:1025.50px;top:250.49px;font-size:39px;line-height:39px;color:#f2f2f2;letter-spacing:-0.741px;">dE Formula:</span>
<span class="t" style="left:1327.00px;top:256.17px;font-size:28.5px;line-height:28.5px;color:#f2f2f2;letter-spacing:-0.861px;transform:scaleX(0.88);transform-origin:0 0;">ITP</span>
<span class="t" style="left:32.26px;top:891.28px;font-size:22px;line-height:22px;color:#d8d8d8;letter-spacing:-0.300px;">0</span>
<span class="t" style="left:32.26px;top:816.88px;font-size:22px;line-height:22px;color:#d8d8d8;letter-spacing:-0.300px;">2</span>
<span class="t" style="left:32.26px;top:742.48px;font-size:22px;line-height:22px;color:#d8d8d8;letter-spacing:-0.300px;">4</span>
<span class="t" style="left:32.26px;top:668.08px;font-size:22px;line-height:22px;color:#d8d8d8;letter-spacing:-0.300px;">6</span>
<span class="t" style="left:32.26px;top:593.68px;font-size:22px;line-height:22px;color:#d8d8d8;letter-spacing:-0.300px;">8</span>
<span class="t" style="left:20.33px;top:519.28px;font-size:22px;line-height:22px;color:#d8d8d8;letter-spacing:-0.300px;">10</span>
<span class="t" style="left:20.33px;top:444.88px;font-size:22px;line-height:22px;color:#d8d8d8;letter-spacing:-0.300px;">12</span>
<span class="t" style="left:20.33px;top:370.48px;font-size:22px;line-height:22px;color:#d8d8d8;letter-spacing:-0.300px;">14</span>
<span class="t" style="left:117.00px;top:321.08px;font-size:22px;line-height:22px;color:#f2f2f2;letter-spacing:0.097px;">Avg: 5.6</span>
<span class="t" style="left:326.00px;top:316.38px;font-size:22px;line-height:22px;color:#d0d0d0;letter-spacing:-0.485px;">DeltaE ITP</span>
<span class="t" style="left:566.00px;top:321.08px;font-size:22px;line-height:22px;color:#f2f2f2;letter-spacing:0.674px;">Max: 9.23</span>
<span class="t" style="left:190.00px;top:919.68px;font-size:37px;line-height:37px;color:#f2f2f2;letter-spacing:1.189px;">w/ Luminance Error</span>
<span class="t" style="left:794.26px;top:891.28px;font-size:22px;line-height:22px;color:#d8d8d8;letter-spacing:-0.300px;">0</span>
<span class="t" style="left:794.26px;top:816.88px;font-size:22px;line-height:22px;color:#d8d8d8;letter-spacing:-0.300px;">2</span>
<span class="t" style="left:794.26px;top:742.48px;font-size:22px;line-height:22px;color:#d8d8d8;letter-spacing:-0.300px;">4</span>
<span class="t" style="left:794.26px;top:668.08px;font-size:22px;line-height:22px;color:#d8d8d8;letter-spacing:-0.300px;">6</span>
<span class="t" style="left:794.26px;top:593.68px;font-size:22px;line-height:22px;color:#d8d8d8;letter-spacing:-0.300px;">8</span>
<span class="t" style="left:782.33px;top:519.28px;font-size:22px;line-height:22px;color:#d8d8d8;letter-spacing:-0.300px;">10</span>
<span class="t" style="left:782.33px;top:444.88px;font-size:22px;line-height:22px;color:#d8d8d8;letter-spacing:-0.300px;">12</span>
<span class="t" style="left:782.33px;top:370.48px;font-size:22px;line-height:22px;color:#d8d8d8;letter-spacing:-0.300px;">14</span>
<span class="t" style="left:871.40px;top:321.08px;font-size:22px;line-height:22px;color:#f2f2f2;letter-spacing:0.318px;">Avg: 2.83</span>
<span class="t" style="left:1088.00px;top:316.38px;font-size:22px;line-height:22px;color:#d0d0d0;letter-spacing:-0.485px;">DeltaE ITP</span>
<span class="t" style="left:1328.40px;top:321.08px;font-size:22px;line-height:22px;color:#f2f2f2;letter-spacing:0.574px;">Max: 8.77</span>
<span class="t" style="left:984.00px;top:919.68px;font-size:37px;line-height:37px;color:#f2f2f2;letter-spacing:1.191px;">w/o Luminance Error</span>
<span class="t" style="left:1560.76px;top:932.38px;font-size:22px;line-height:22px;color:#d8d8d8;letter-spacing:-0.050px;">0</span>
<span class="t" style="left:1530.33px;top:869.50px;font-size:22px;line-height:22px;color:#d8d8d8;letter-spacing:-0.050px;">0.05</span>
<span class="t" style="left:1542.52px;top:804.13px;font-size:22px;line-height:22px;color:#d8d8d8;letter-spacing:-0.050px;">0.1</span>
<span class="t" style="left:1530.33px;top:741.25px;font-size:22px;line-height:22px;color:#d8d8d8;letter-spacing:-0.050px;">0.15</span>
<span class="t" style="left:1542.52px;top:678.38px;font-size:22px;line-height:22px;color:#d8d8d8;letter-spacing:-0.050px;">0.2</span>
<span class="t" style="left:1530.33px;top:615.50px;font-size:22px;line-height:22px;color:#d8d8d8;letter-spacing:-0.050px;">0.25</span>
<span class="t" style="left:1542.52px;top:552.63px;font-size:22px;line-height:22px;color:#d8d8d8;letter-spacing:-0.050px;">0.3</span>
<span class="t" style="left:1530.33px;top:489.75px;font-size:22px;line-height:22px;color:#d8d8d8;letter-spacing:-0.050px;">0.35</span>
<span class="t" style="left:1542.52px;top:426.88px;font-size:22px;line-height:22px;color:#d8d8d8;letter-spacing:-0.050px;">0.4</span>
<span class="t" style="left:1530.33px;top:364.00px;font-size:22px;line-height:22px;color:#d8d8d8;letter-spacing:-0.050px;">0.45</span>
<span class="t" style="left:1542.52px;top:301.13px;font-size:22px;line-height:22px;color:#d8d8d8;letter-spacing:-0.050px;">0.5</span>
<span class="t" style="left:1530.33px;top:238.25px;font-size:22px;line-height:22px;color:#d8d8d8;letter-spacing:-0.050px;">0.55</span>
<span class="t" style="left:1576.88px;top:954.98px;font-size:22px;line-height:22px;color:#d8d8d8;letter-spacing:-0.050px;">0</span>
<span class="t" style="left:1636.17px;top:954.98px;font-size:22px;line-height:22px;color:#d8d8d8;letter-spacing:-0.050px;">0.05</span>
<span class="t" style="left:1716.76px;top:954.98px;font-size:22px;line-height:22px;color:#d8d8d8;letter-spacing:-0.050px;">0.1</span>
<span class="t" style="left:1785.17px;top:954.98px;font-size:22px;line-height:22px;color:#d8d8d8;letter-spacing:-0.050px;">0.15</span>
<span class="t" style="left:1865.76px;top:954.98px;font-size:22px;line-height:22px;color:#d8d8d8;letter-spacing:-0.050px;">0.2</span>
<span class="t" style="left:1934.17px;top:954.98px;font-size:22px;line-height:22px;color:#d8d8d8;letter-spacing:-0.050px;">0.25</span>
<span class="t" style="left:2014.76px;top:954.98px;font-size:22px;line-height:22px;color:#d8d8d8;letter-spacing:-0.050px;">0.3</span>
<span class="t" style="left:2083.17px;top:954.98px;font-size:22px;line-height:22px;color:#d8d8d8;letter-spacing:-0.050px;">0.35</span>
<span class="t" style="left:2163.76px;top:954.98px;font-size:22px;line-height:22px;color:#d8d8d8;letter-spacing:-0.050px;">0.4</span>
<span class="t" style="left:2232.17px;top:954.98px;font-size:22px;line-height:22px;color:#d8d8d8;letter-spacing:-0.050px;">0.45</span>
<span class="t" style="left:2312.76px;top:954.98px;font-size:22px;line-height:22px;color:#d8d8d8;letter-spacing:-0.050px;">0.5</span>
<span class="t" style="left:2381.17px;top:954.98px;font-size:22px;line-height:22px;color:#d8d8d8;letter-spacing:-0.050px;">0.55</span>
<span class="t" style="left:2461.76px;top:954.98px;font-size:22px;line-height:22px;color:#d8d8d8;letter-spacing:-0.050px;">0.6</span>
<span class="t" style="left:1962.00px;top:157.88px;font-size:22px;line-height:22px;color:#d8d8d8;letter-spacing:-0.040px;">CIE 1976 u'v'</span>
<span class="t" style="left:2059.00px;top:888.68px;font-size:37px;line-height:37px;color:#f2f2f2;letter-spacing:0.278px;">RGB Triplet: 71, 94, 104</span>
<span class="t" style="left:256.00px;top:1007.83px;font-size:23px;line-height:23px;color:#f2f2f2;letter-spacing:0.402px;">White</span>
<span class="t" style="left:352.50px;top:1007.83px;font-size:23px;line-height:23px;color:#f2f2f2;letter-spacing:-0.636px;">Gray 80</span>
<span class="t" style="left:451.50px;top:1007.83px;font-size:23px;line-height:23px;color:#f2f2f2;letter-spacing:-0.719px;">Gray 65</span>
<span class="t" style="left:550.50px;top:1007.83px;font-size:23px;line-height:23px;color:#f2f2f2;letter-spacing:-0.636px;">Gray 50</span>
<span class="t" style="left:649.50px;top:1007.83px;font-size:23px;line-height:23px;color:#f2f2f2;letter-spacing:-0.719px;">Gray 35</span>
<span class="t" style="left:744.50px;top:1007.83px;font-size:23px;line-height:23px;color:#f2f2f2;letter-spacing:-0.712px;">Dark Skin</span>
<span class="t" style="left:852.50px;top:1007.83px;font-size:23px;line-height:23px;color:#f2f2f2;letter-spacing:-0.612px;">Light Skin</span>
<span class="t" style="left:963.00px;top:1007.83px;font-size:23px;line-height:23px;color:#f2f2f2;letter-spacing:-1.038px;">Blue Sky</span>
<span class="t" style="left:1068.50px;top:1007.83px;font-size:23px;line-height:23px;color:#f2f2f2;letter-spacing:-0.823px;">Foliage</span>
<span class="t" style="left:1160.00px;top:1007.83px;font-size:23px;line-height:23px;color:#f2f2f2;letter-spacing:-0.244px;">Blue Flower</span>
<span class="t" style="left:1292.50px;top:1007.83px;font-size:23px;line-height:23px;color:#f2f2f2;letter-spacing:-0.405px;">Bluish Green</span>
<span class="t" style="left:1440.00px;top:1007.83px;font-size:23px;line-height:23px;color:#f2f2f2;letter-spacing:-0.643px;">Orange</span>
<span class="t" style="left:1533.00px;top:1007.83px;font-size:23px;line-height:23px;color:#f2f2f2;letter-spacing:-0.252px;">Purplish Blue</span>
<span class="t" style="left:1678.50px;top:1007.83px;font-size:23px;line-height:23px;color:#f2f2f2;letter-spacing:-0.114px;">Moderate Red</span>
<span class="t" style="left:1840.00px;top:1007.83px;font-size:23px;line-height:23px;color:#f2f2f2;letter-spacing:-0.197px;">Purple</span>
<span class="t" style="left:1922.00px;top:1007.83px;font-size:23px;line-height:23px;color:#f2f2f2;letter-spacing:-0.314px;">Yellow Green</span>
<span class="t" style="left:2068.00px;top:1007.83px;font-size:23px;line-height:23px;color:#f2f2f2;letter-spacing:-0.354px;">Orange Yellow</span>
<span class="t" style="left:2239.50px;top:1007.83px;font-size:23px;line-height:23px;color:#f2f2f2;letter-spacing:-0.511px;">Blue</span>
<span class="t" style="left:2323.00px;top:1007.83px;font-size:23px;line-height:23px;color:#f2f2f2;letter-spacing:-0.481px;">Green</span>
<span class="t" style="left:2434.00px;top:1007.83px;font-size:23px;line-height:23px;color:#f2f2f2;letter-spacing:-2.096px;">Red</span>
<span class="t" style="left:43.00px;top:1047.54px;font-size:25px;line-height:25px;color:#f2f2f2;font-weight:700;letter-spacing:-1.094px;">x: CIE31</span>
<span class="t" style="left:236.00px;top:1047.54px;font-size:25px;line-height:25px;color:#f2f2f2;letter-spacing:-0.473px;">0.3098</span>
<span class="t" style="left:348.50px;top:1047.54px;font-size:25px;line-height:25px;color:#f2f2f2;letter-spacing:-0.473px;">0.3097</span>
<span class="t" style="left:447.50px;top:1047.54px;font-size:25px;line-height:25px;color:#f2f2f2;letter-spacing:0.269px;">0.3111</span>
<span class="t" style="left:546.50px;top:1047.54px;font-size:25px;line-height:25px;color:#f2f2f2;letter-spacing:-0.473px;">0.3105</span>
<span class="t" style="left:645.50px;top:1047.54px;font-size:25px;line-height:25px;color:#f2f2f2;letter-spacing:-0.473px;">0.3108</span>
<span class="t" style="left:744.50px;top:1047.54px;font-size:25px;line-height:25px;color:#f2f2f2;letter-spacing:-0.473px;">0.4028</span>
<span class="t" style="left:852.50px;top:1047.54px;font-size:25px;line-height:25px;color:#f2f2f2;letter-spacing:-0.473px;">0.3742</span>
<span class="t" style="left:961.50px;top:1047.54px;font-size:25px;line-height:25px;color:#f2f2f2;letter-spacing:-0.473px;">0.2482</span>
<span class="t" style="left:1060.50px;top:1047.54px;font-size:25px;line-height:25px;color:#f2f2f2;letter-spacing:-0.473px;">0.3429</span>
<span class="t" style="left:1159.50px;top:1047.54px;font-size:25px;line-height:25px;color:#f2f2f2;letter-spacing:-0.473px;">0.2640</span>
<span class="t" style="left:1292.00px;top:1047.54px;font-size:25px;line-height:25px;color:#f2f2f2;letter-spacing:-0.473px;">0.2697</span>
<span class="t" style="left:1434.00px;top:1047.54px;font-size:25px;line-height:25px;color:#f2f2f2;letter-spacing:-0.473px;">0.5024</span>
<span class="t" style="left:1533.00px;top:1047.54px;font-size:25px;line-height:25px;color:#f2f2f2;letter-spacing:-0.473px;">0.2125</span>
<span class="t" style="left:1678.50px;top:1047.54px;font-size:25px;line-height:25px;color:#f2f2f2;letter-spacing:-0.473px;">0.4594</span>
<span class="t" style="left:1836.50px;top:1047.54px;font-size:25px;line-height:25px;color:#f2f2f2;letter-spacing:-0.473px;">0.2882</span>
<span class="t" style="left:1922.00px;top:1047.54px;font-size:25px;line-height:25px;color:#f2f2f2;letter-spacing:-0.473px;">0.3785</span>
<span class="t" style="left:2068.00px;top:1047.54px;font-size:25px;line-height:25px;color:#f2f2f2;letter-spacing:-0.473px;">0.4685</span>
<span class="t" style="left:2225.50px;top:1047.54px;font-size:25px;line-height:25px;color:#f2f2f2;letter-spacing:-0.473px;">0.1895</span>
<span class="t" style="left:2311.00px;top:1047.54px;font-size:25px;line-height:25px;color:#f2f2f2;letter-spacing:-0.473px;">0.3092</span>
<span class="t" style="left:2410.00px;top:1047.54px;font-size:25px;line-height:25px;color:#f2f2f2;letter-spacing:-0.473px;">0.5527</span>
<span class="t" style="left:2509.00px;top:1047.54px;font-size:25px;line-height:25px;color:#f2f2f2;letter-spacing:-0.473px;">0.4480</span>
<span class="t" style="left:43.00px;top:1087.14px;font-size:25px;line-height:25px;color:#f2f2f2;font-weight:700;letter-spacing:-1.165px;">y: CIE31</span>
<span class="t" style="left:236.00px;top:1087.14px;font-size:25px;line-height:25px;color:#f2f2f2;letter-spacing:-0.473px;">0.3242</span>
<span class="t" style="left:348.50px;top:1087.14px;font-size:25px;line-height:25px;color:#f2f2f2;letter-spacing:-0.473px;">0.3264</span>
<span class="t" style="left:447.50px;top:1087.14px;font-size:25px;line-height:25px;color:#f2f2f2;letter-spacing:-0.473px;">0.3273</span>
<span class="t" style="left:546.50px;top:1087.14px;font-size:25px;line-height:25px;color:#f2f2f2;letter-spacing:-0.473px;">0.3274</span>
<span class="t" style="left:645.50px;top:1087.14px;font-size:25px;line-height:25px;color:#f2f2f2;letter-spacing:-0.473px;">0.3280</span>
<span class="t" style="left:744.50px;top:1087.14px;font-size:25px;line-height:25px;color:#f2f2f2;letter-spacing:-0.473px;">0.3676</span>
<span class="t" style="left:852.50px;top:1087.14px;font-size:25px;line-height:25px;color:#f2f2f2;letter-spacing:-0.473px;">0.3601</span>
<span class="t" style="left:961.50px;top:1087.14px;font-size:25px;line-height:25px;color:#f2f2f2;letter-spacing:-0.473px;">0.2617</span>
<span class="t" style="left:1060.50px;top:1087.14px;font-size:25px;line-height:25px;color:#f2f2f2;letter-spacing:-0.473px;">0.4356</span>
<span class="t" style="left:1159.50px;top:1087.14px;font-size:25px;line-height:25px;color:#f2f2f2;letter-spacing:-0.473px;">0.2508</span>
<span class="t" style="left:1292.00px;top:1087.14px;font-size:25px;line-height:25px;color:#f2f2f2;letter-spacing:-0.473px;">0.3552</span>
<span class="t" style="left:1434.00px;top:1087.14px;font-size:25px;line-height:25px;color:#f2f2f2;letter-spacing:-0.473px;">0.4252</span>
<span class="t" style="left:1533.00px;top:1087.14px;font-size:25px;line-height:25px;color:#f2f2f2;letter-spacing:-0.473px;">0.1815</span>
<span class="t" style="left:1678.50px;top:1087.14px;font-size:25px;line-height:25px;color:#f2f2f2;letter-spacing:-0.473px;">0.3147</span>
<span class="t" style="left:1836.50px;top:1087.14px;font-size:25px;line-height:25px;color:#f2f2f2;letter-spacing:-0.473px;">0.2140</span>
<span class="t" style="left:1922.00px;top:1087.14px;font-size:25px;line-height:25px;color:#f2f2f2;letter-spacing:-0.473px;">0.4959</span>
<span class="t" style="left:2068.00px;top:1087.14px;font-size:25px;line-height:25px;color:#f2f2f2;letter-spacing:-0.473px;">0.4526</span>
<span class="t" style="left:2225.50px;top:1087.14px;font-size:25px;line-height:25px;color:#f2f2f2;letter-spacing:-0.473px;">0.1338</span>
<span class="t" style="left:2311.00px;top:1087.14px;font-size:25px;line-height:25px;color:#f2f2f2;letter-spacing:-0.473px;">0.5086</span>
<span class="t" style="left:2410.00px;top:1087.14px;font-size:25px;line-height:25px;color:#f2f2f2;letter-spacing:-0.473px;">0.3240</span>
<span class="t" style="left:2509.00px;top:1087.14px;font-size:25px;line-height:25px;color:#f2f2f2;letter-spacing:-0.473px;">0.4702</span>
<span class="t" style="left:43.00px;top:1126.74px;font-size:25px;line-height:25px;color:#f2f2f2;font-weight:700;">Y</span>
<span class="t" style="left:236.00px;top:1126.74px;font-size:25px;line-height:25px;color:#f2f2f2;letter-spacing:-0.525px;">978.6144</span>
<span class="t" style="left:348.50px;top:1126.74px;font-size:25px;line-height:25px;color:#f2f2f2;letter-spacing:-0.503px;">75.7429</span>
<span class="t" style="left:447.50px;top:1126.74px;font-size:25px;line-height:25px;color:#f2f2f2;letter-spacing:-0.503px;">68.9576</span>
<span class="t" style="left:546.50px;top:1126.74px;font-size:25px;line-height:25px;color:#f2f2f2;letter-spacing:-0.503px;">53.1712</span>
<span class="t" style="left:645.50px;top:1126.74px;font-size:25px;line-height:25px;color:#f2f2f2;letter-spacing:-0.503px;">39.0787</span>
<span class="t" style="left:744.50px;top:1126.74px;font-size:25px;line-height:25px;color:#f2f2f2;letter-spacing:-0.503px;">10.4578</span>
<span class="t" style="left:852.50px;top:1126.74px;font-size:25px;line-height:25px;color:#f2f2f2;letter-spacing:-0.503px;">37.7834</span>
<span class="t" style="left:961.50px;top:1126.74px;font-size:25px;line-height:25px;color:#f2f2f2;letter-spacing:-0.503px;">21.0089</span>
<span class="t" style="left:1060.50px;top:1126.74px;font-size:25px;line-height:25px;color:#f2f2f2;letter-spacing:-0.503px;">14.4580</span>
<span class="t" style="left:1159.50px;top:1126.74px;font-size:25px;line-height:25px;color:#f2f2f2;letter-spacing:-0.503px;">25.5621</span>
<span class="t" style="left:1292.00px;top:1126.74px;font-size:25px;line-height:25px;color:#f2f2f2;letter-spacing:-0.503px;">46.4518</span>
<span class="t" style="left:1434.00px;top:1126.74px;font-size:25px;line-height:25px;color:#f2f2f2;letter-spacing:-0.503px;">30.4073</span>
<span class="t" style="left:1533.00px;top:1126.74px;font-size:25px;line-height:25px;color:#f2f2f2;letter-spacing:-0.503px;">12.6556</span>
<span class="t" style="left:1678.50px;top:1126.74px;font-size:25px;line-height:25px;color:#f2f2f2;letter-spacing:-0.503px;">19.5808</span>
<span class="t" style="left:1836.50px;top:1126.74px;font-size:25px;line-height:25px;color:#f2f2f2;letter-spacing:-0.473px;">6.8439</span>
<span class="t" style="left:1922.00px;top:1126.74px;font-size:25px;line-height:25px;color:#f2f2f2;letter-spacing:-0.503px;">46.9932</span>
<span class="t" style="left:2068.00px;top:1126.74px;font-size:25px;line-height:25px;color:#f2f2f2;letter-spacing:-0.503px;">46.2980</span>
<span class="t" style="left:2225.50px;top:1126.74px;font-size:25px;line-height:25px;color:#f2f2f2;letter-spacing:-0.473px;">6.6053</span>
<span class="t" style="left:2311.00px;top:1126.74px;font-size:25px;line-height:25px;color:#f2f2f2;letter-spacing:-0.503px;">26.1897</span>
<span class="t" style="left:2410.00px;top:1126.74px;font-size:25px;line-height:25px;color:#f2f2f2;letter-spacing:-0.503px;">12.1271</span>
<span class="t" style="left:2509.00px;top:1126.74px;font-size:25px;line-height:25px;color:#f2f2f2;letter-spacing:-0.503px;">61.5273</span>
<span class="t" style="left:43.00px;top:1166.34px;font-size:25px;line-height:25px;color:#f2f2f2;font-weight:700;letter-spacing:-0.554px;">Target x:CIE31</span>
<span class="t" style="left:236.00px;top:1166.34px;font-size:25px;line-height:25px;color:#f2f2f2;letter-spacing:-0.473px;">0.3127</span>
<span class="t" style="left:348.50px;top:1166.34px;font-size:25px;line-height:25px;color:#f2f2f2;letter-spacing:-0.473px;">0.3127</span>
<span class="t" style="left:447.50px;top:1166.34px;font-size:25px;line-height:25px;color:#f2f2f2;letter-spacing:-0.473px;">0.3127</span>
<span class="t" style="left:546.50px;top:1166.34px;font-size:25px;line-height:25px;color:#f2f2f2;letter-spacing:-0.473px;">0.3127</span>
<span class="t" style="left:645.50px;top:1166.34px;font-size:25px;line-height:25px;color:#f2f2f2;letter-spacing:-0.473px;">0.3127</span>
<span class="t" style="left:744.50px;top:1166.34px;font-size:25px;line-height:25px;color:#f2f2f2;letter-spacing:-0.473px;">0.4095</span>
<span class="t" style="left:852.50px;top:1166.34px;font-size:25px;line-height:25px;color:#f2f2f2;letter-spacing:-0.473px;">0.3796</span>
<span class="t" style="left:961.50px;top:1166.34px;font-size:25px;line-height:25px;color:#f2f2f2;letter-spacing:-0.473px;">0.2494</span>
<span class="t" style="left:1060.50px;top:1166.34px;font-size:25px;line-height:25px;color:#f2f2f2;letter-spacing:-0.473px;">0.3405</span>
<span class="t" style="left:1159.50px;top:1166.34px;font-size:25px;line-height:25px;color:#f2f2f2;letter-spacing:-0.473px;">0.2662</span>
<span class="t" style="left:1292.00px;top:1166.34px;font-size:25px;line-height:25px;color:#f2f2f2;letter-spacing:-0.473px;">0.2621</span>
<span class="t" style="left:1434.00px;top:1166.34px;font-size:25px;line-height:25px;color:#f2f2f2;letter-spacing:-0.473px;">0.5106</span>
<span class="t" style="left:1533.00px;top:1166.34px;font-size:25px;line-height:25px;color:#f2f2f2;letter-spacing:-0.473px;">0.2136</span>
<span class="t" style="left:1678.50px;top:1166.34px;font-size:25px;line-height:25px;color:#f2f2f2;letter-spacing:-0.473px;">0.4597</span>
<span class="t" style="left:1836.50px;top:1166.34px;font-size:25px;line-height:25px;color:#f2f2f2;letter-spacing:-0.473px;">0.2901</span>
<span class="t" style="left:1922.00px;top:1166.34px;font-size:25px;line-height:25px;color:#f2f2f2;letter-spacing:-0.473px;">0.3764</span>
<span class="t" style="left:2068.00px;top:1166.34px;font-size:25px;line-height:25px;color:#f2f2f2;letter-spacing:-0.473px;">0.4745</span>
<span class="t" style="left:2225.50px;top:1166.34px;font-size:25px;line-height:25px;color:#f2f2f2;letter-spacing:-0.473px;">0.1885</span>
<span class="t" style="left:2311.00px;top:1166.34px;font-size:25px;line-height:25px;color:#f2f2f2;letter-spacing:-0.473px;">0.3085</span>
<span class="t" style="left:2410.00px;top:1166.34px;font-size:25px;line-height:25px;color:#f2f2f2;letter-spacing:-0.473px;">0.5466</span>
<span class="t" style="left:2509.00px;top:1166.34px;font-size:25px;line-height:25px;color:#f2f2f2;letter-spacing:-0.473px;">0.4476</span>
<span class="t" style="left:43.00px;top:1205.94px;font-size:25px;line-height:25px;color:#f2f2f2;font-weight:700;letter-spacing:-0.554px;">Target y:CIE31</span>
<span class="t" style="left:236.00px;top:1205.94px;font-size:25px;line-height:25px;color:#f2f2f2;letter-spacing:-0.473px;">0.3290</span>
<span class="t" style="left:348.50px;top:1205.94px;font-size:25px;line-height:25px;color:#f2f2f2;letter-spacing:-0.473px;">0.3290</span>
<span class="t" style="left:447.50px;top:1205.94px;font-size:25px;line-height:25px;color:#f2f2f2;letter-spacing:-0.473px;">0.3290</span>
<span class="t" style="left:546.50px;top:1205.94px;font-size:25px;line-height:25px;color:#f2f2f2;letter-spacing:-0.473px;">0.3290</span>
<span class="t" style="left:645.50px;top:1205.94px;font-size:25px;line-height:25px;color:#f2f2f2;letter-spacing:-0.473px;">0.3290</span>
<span class="t" style="left:744.50px;top:1205.94px;font-size:25px;line-height:25px;color:#f2f2f2;letter-spacing:-0.473px;">0.3620</span>
<span class="t" style="left:852.50px;top:1205.94px;font-size:25px;line-height:25px;color:#f2f2f2;letter-spacing:-0.473px;">0.3560</span>
<span class="t" style="left:961.50px;top:1205.94px;font-size:25px;line-height:25px;color:#f2f2f2;letter-spacing:-0.473px;">0.2628</span>
<span class="t" style="left:1060.50px;top:1205.94px;font-size:25px;line-height:25px;color:#f2f2f2;letter-spacing:-0.473px;">0.4317</span>
<span class="t" style="left:1159.50px;top:1205.94px;font-size:25px;line-height:25px;color:#f2f2f2;letter-spacing:-0.473px;">0.2503</span>
<span class="t" style="left:1292.00px;top:1205.94px;font-size:25px;line-height:25px;color:#f2f2f2;letter-spacing:-0.473px;">0.3581</span>
<span class="t" style="left:1434.00px;top:1205.94px;font-size:25px;line-height:25px;color:#f2f2f2;letter-spacing:-0.473px;">0.4129</span>
<span class="t" style="left:1533.00px;top:1205.94px;font-size:25px;line-height:25px;color:#f2f2f2;letter-spacing:-0.473px;">0.1837</span>
<span class="t" style="left:1678.50px;top:1205.94px;font-size:25px;line-height:25px;color:#f2f2f2;letter-spacing:-0.102px;">0.3114</span>
<span class="t" style="left:1836.50px;top:1205.94px;font-size:25px;line-height:25px;color:#f2f2f2;letter-spacing:-0.473px;">0.2171</span>
<span class="t" style="left:1922.00px;top:1205.94px;font-size:25px;line-height:25px;color:#f2f2f2;letter-spacing:-0.473px;">0.5012</span>
<span class="t" style="left:2068.00px;top:1205.94px;font-size:25px;line-height:25px;color:#f2f2f2;letter-spacing:-0.473px;">0.4449</span>
<span class="t" style="left:2225.50px;top:1205.94px;font-size:25px;line-height:25px;color:#f2f2f2;letter-spacing:-0.473px;">0.1355</span>
<span class="t" style="left:2311.00px;top:1205.94px;font-size:25px;line-height:25px;color:#f2f2f2;letter-spacing:-0.473px;">0.4962</span>
<span class="t" style="left:2410.00px;top:1205.94px;font-size:25px;line-height:25px;color:#f2f2f2;letter-spacing:-0.473px;">0.3189</span>
<span class="t" style="left:2509.00px;top:1205.94px;font-size:25px;line-height:25px;color:#f2f2f2;letter-spacing:-0.473px;">0.4704</span>
<span class="t" style="left:43.00px;top:1245.54px;font-size:25px;line-height:25px;color:#f2f2f2;font-weight:700;letter-spacing:-0.238px;">Target Y</span>
<span class="t" style="left:236.00px;top:1245.54px;font-size:25px;line-height:25px;color:#f2f2f2;letter-spacing:-0.525px;">978.6144</span>
<span class="t" style="left:348.50px;top:1245.54px;font-size:25px;line-height:25px;color:#f2f2f2;letter-spacing:-0.503px;">80.3390</span>
<span class="t" style="left:447.50px;top:1245.54px;font-size:25px;line-height:25px;color:#f2f2f2;letter-spacing:-0.503px;">65.7795</span>
<span class="t" style="left:546.50px;top:1245.54px;font-size:25px;line-height:25px;color:#f2f2f2;letter-spacing:-0.503px;">49.4422</span>
<span class="t" style="left:645.50px;top:1245.54px;font-size:25px;line-height:25px;color:#f2f2f2;letter-spacing:-0.503px;">35.3489</span>
<span class="t" style="left:744.50px;top:1245.54px;font-size:25px;line-height:25px;color:#f2f2f2;letter-spacing:-0.473px;">9.6506</span>
<span class="t" style="left:852.50px;top:1245.54px;font-size:25px;line-height:25px;color:#f2f2f2;letter-spacing:-0.503px;">35.3720</span>
<span class="t" style="left:961.50px;top:1245.54px;font-size:25px;line-height:25px;color:#f2f2f2;letter-spacing:-0.503px;">18.8340</span>
<span class="t" style="left:1060.50px;top:1245.54px;font-size:25px;line-height:25px;color:#f2f2f2;letter-spacing:-0.503px;">13.1360</span>
<span class="t" style="left:1159.50px;top:1245.54px;font-size:25px;line-height:25px;color:#f2f2f2;letter-spacing:-0.503px;">23.3018</span>
<span class="t" style="left:1292.00px;top:1245.54px;font-size:25px;line-height:25px;color:#f2f2f2;letter-spacing:-0.503px;">43.1697</span>
<span class="t" style="left:1434.00px;top:1245.54px;font-size:25px;line-height:25px;color:#f2f2f2;letter-spacing:-0.503px;">28.7456</span>
<span class="t" style="left:1533.00px;top:1245.54px;font-size:25px;line-height:25px;color:#f2f2f2;letter-spacing:-0.194px;">11.5196</span>
<span class="t" style="left:1678.50px;top:1245.54px;font-size:25px;line-height:25px;color:#f2f2f2;letter-spacing:-0.503px;">18.5140</span>
<span class="t" style="left:1836.50px;top:1245.54px;font-size:25px;line-height:25px;color:#f2f2f2;letter-spacing:-0.473px;">6.4950</span>
<span class="t" style="left:1922.00px;top:1245.54px;font-size:25px;line-height:25px;color:#f2f2f2;letter-spacing:-0.503px;">44.1559</span>
<span class="t" style="left:2068.00px;top:1245.54px;font-size:25px;line-height:25px;color:#f2f2f2;letter-spacing:-0.503px;">44.1961</span>
<span class="t" style="left:2225.50px;top:1245.54px;font-size:25px;line-height:25px;color:#f2f2f2;letter-spacing:-0.473px;">6.0883</span>
<span class="t" style="left:2311.00px;top:1245.54px;font-size:25px;line-height:25px;color:#f2f2f2;letter-spacing:-0.503px;">23.5867</span>
<span class="t" style="left:2410.00px;top:1245.54px;font-size:25px;line-height:25px;color:#f2f2f2;letter-spacing:-0.194px;">11.4907</span>
<span class="t" style="left:2509.00px;top:1245.54px;font-size:25px;line-height:25px;color:#f2f2f2;letter-spacing:-0.503px;">59.1028</span>
<span class="t" style="left:43.00px;top:1285.14px;font-size:25px;line-height:25px;color:#f2f2f2;font-weight:700;letter-spacing:-1.010px;">dE_ICtCp_240</span>
<span class="t" style="left:236.00px;top:1285.14px;font-size:25px;line-height:25px;color:#f2f2f2;letter-spacing:-0.473px;">0.7258</span>
<span class="t" style="left:348.50px;top:1285.14px;font-size:25px;line-height:25px;color:#f2f2f2;letter-spacing:-0.473px;">1.4916</span>
<span class="t" style="left:447.50px;top:1285.14px;font-size:25px;line-height:25px;color:#f2f2f2;letter-spacing:-0.473px;">1.1508</span>
<span class="t" style="left:546.50px;top:1285.14px;font-size:25px;line-height:25px;color:#f2f2f2;letter-spacing:-0.473px;">1.7129</span>
<span class="t" style="left:645.50px;top:1285.14px;font-size:25px;line-height:25px;color:#f2f2f2;letter-spacing:-0.473px;">2.2508</span>
<span class="t" style="left:744.50px;top:1285.14px;font-size:25px;line-height:25px;color:#f2f2f2;letter-spacing:-0.473px;">2.0852</span>
<span class="t" style="left:852.50px;top:1285.14px;font-size:25px;line-height:25px;color:#f2f2f2;letter-spacing:-0.473px;">1.9671</span>
<span class="t" style="left:961.50px;top:1285.14px;font-size:25px;line-height:25px;color:#f2f2f2;letter-spacing:-0.473px;">2.3064</span>
<span class="t" style="left:1060.50px;top:1285.14px;font-size:25px;line-height:25px;color:#f2f2f2;letter-spacing:-0.473px;">1.9790</span>
<span class="t" style="left:1159.50px;top:1285.14px;font-size:25px;line-height:25px;color:#f2f2f2;letter-spacing:-0.473px;">2.0483</span>
<span class="t" style="left:1292.00px;top:1285.14px;font-size:25px;line-height:25px;color:#f2f2f2;letter-spacing:-0.473px;">2.3145</span>
<span class="t" style="left:1434.00px;top:1285.14px;font-size:25px;line-height:25px;color:#f2f2f2;letter-spacing:-0.473px;">3.0774</span>
<span class="t" style="left:1533.00px;top:1285.14px;font-size:25px;line-height:25px;color:#f2f2f2;letter-spacing:-0.473px;">1.9500</span>
<span class="t" style="left:1678.50px;top:1285.14px;font-size:25px;line-height:25px;color:#f2f2f2;letter-spacing:-0.473px;">1.2809</span>
<span class="t" style="left:1836.50px;top:1285.14px;font-size:25px;line-height:25px;color:#f2f2f2;letter-spacing:-0.473px;">1.0707</span>
<span class="t" style="left:1922.00px;top:1285.14px;font-size:25px;line-height:25px;color:#f2f2f2;letter-spacing:-0.473px;">1.5882</span>
<span class="t" style="left:2068.00px;top:1285.14px;font-size:25px;line-height:25px;color:#f2f2f2;letter-spacing:-0.473px;">2.0102</span>
<span class="t" style="left:2225.50px;top:1285.14px;font-size:25px;line-height:25px;color:#f2f2f2;letter-spacing:-0.473px;">1.6366</span>
<span class="t" style="left:2311.00px;top:1285.14px;font-size:25px;line-height:25px;color:#f2f2f2;letter-spacing:-0.473px;">2.6686</span>
<span class="t" style="left:2410.00px;top:1285.14px;font-size:25px;line-height:25px;color:#f2f2f2;letter-spacing:-0.473px;">1.6451</span>
<span class="t" style="left:2509.00px;top:1285.14px;font-size:25px;line-height:25px;color:#f2f2f2;letter-spacing:-0.473px;">1.0322</span>
<span class="t" style="left:2520.00px;top:1007.83px;font-size:23px;line-height:23px;color:#f2f2f2;letter-spacing:-0.128px;">Yellow</span>
<span class="t" style="left:35.06px;top:1426.90px;font-size:10.4px;line-height:10.4px;color:#222;font-weight:700;letter-spacing:-0.150px;">White</span>
<span class="t" style="left:127.47px;top:1426.90px;font-size:10.4px;line-height:10.4px;color:#222;font-weight:700;letter-spacing:-0.150px;">Gray 80</span>
<span class="t" style="left:224.65px;top:1426.90px;font-size:10.4px;line-height:10.4px;color:#222;font-weight:700;letter-spacing:-0.150px;">Gray 65</span>
<span class="t" style="left:321.83px;top:1426.90px;font-size:10.4px;line-height:10.4px;color:#222;font-weight:700;letter-spacing:-0.150px;">Gray 50</span>
<span class="t" style="left:419.01px;top:1426.90px;font-size:10.4px;line-height:10.4px;color:#222;font-weight:700;letter-spacing:-0.150px;">Gray 35</span>
<span class="t" style="left:511.43px;top:1426.90px;font-size:10.4px;line-height:10.4px;color:#222;font-weight:700;letter-spacing:-0.150px;">Dark Skin</span>
<span class="t" style="left:607.55px;top:1426.90px;font-size:10.4px;line-height:10.4px;color:#222;font-weight:700;letter-spacing:-0.150px;">Light Skin</span>
<span class="t" style="left:707.74px;top:1426.90px;font-size:10.4px;line-height:10.4px;color:#222;font-weight:700;letter-spacing:-0.150px;">Blue Sky</span>
<span class="t" style="left:808.60px;top:1426.90px;font-size:10.4px;line-height:10.4px;color:#222;font-weight:700;letter-spacing:-0.150px;">Foliage</span>
<span class="t" style="left:894.83px;top:1426.90px;font-size:10.4px;line-height:10.4px;color:#222;font-weight:700;letter-spacing:-0.150px;">Blue Flower</span>
<span class="t" style="left:989.19px;top:1426.90px;font-size:10.4px;line-height:10.4px;color:#222;font-weight:700;letter-spacing:-0.150px;">Bluish Green</span>
<span class="t" style="left:1100.07px;top:1426.90px;font-size:10.4px;line-height:10.4px;color:#222;font-weight:700;letter-spacing:-0.150px;">Orange</span>
<span class="t" style="left:1182.47px;top:1426.90px;font-size:10.4px;line-height:10.4px;color:#222;font-weight:700;letter-spacing:-0.150px;">Purplish Blue</span>
<span class="t" style="left:1278.71px;top:1426.90px;font-size:10.4px;line-height:10.4px;color:#222;font-weight:700;letter-spacing:-0.150px;">Moderate Red</span>
<span class="t" style="left:1393.63px;top:1426.90px;font-size:10.4px;line-height:10.4px;color:#222;font-weight:700;letter-spacing:-0.150px;">Purple</span>
<span class="t" style="left:1474.80px;top:1426.90px;font-size:10.4px;line-height:10.4px;color:#222;font-weight:700;letter-spacing:-0.150px;">Yellow Green</span>
<span class="t" style="left:1568.88px;top:1426.90px;font-size:10.4px;line-height:10.4px;color:#222;font-weight:700;letter-spacing:-0.150px;">Orange Yellow</span>
<span class="t" style="left:1689.93px;top:1426.90px;font-size:10.4px;line-height:10.4px;color:#222;font-weight:700;letter-spacing:-0.150px;">Blue</span>
<span class="t" style="left:1783.42px;top:1426.90px;font-size:10.4px;line-height:10.4px;color:#222;font-weight:700;letter-spacing:-0.150px;">Green</span>
<span class="t" style="left:1885.66px;top:1426.90px;font-size:10.4px;line-height:10.4px;color:#222;font-weight:700;letter-spacing:-0.150px;">Red</span>
<span class="t" style="left:1976.71px;top:1426.90px;font-size:10.4px;line-height:10.4px;color:#222;font-weight:700;letter-spacing:-0.150px;">Yellow</span>
<span class="t" style="left:2069.06px;top:1426.90px;font-size:10.4px;line-height:10.4px;color:#222;font-weight:700;letter-spacing:-0.150px;">Magenta</span>
<span class="t" style="left:2174.38px;top:1426.90px;font-size:10.4px;line-height:10.4px;color:#fff;font-weight:700;letter-spacing:-0.150px;">Cyan</span>
<span class="t" style="left:2311.08px;top:1414.29px;font-size:19.5px;line-height:19.5px;color:#333;font-weight:700;">«</span>
<span class="t" style="left:2525.58px;top:1414.29px;font-size:19.5px;line-height:19.5px;color:#333;font-weight:700;">»</span>
<span class="t" style="left:2344.00px;top:1414.20px;font-size:21.5px;line-height:21.5px;color:#2e2e2e;letter-spacing:0.601px;text-shadow:0 0 1px #2e2e2e;">Back</span>
<span class="t" style="left:2450.90px;top:1414.20px;font-size:21.5px;line-height:21.5px;color:#2e2e2e;letter-spacing:2.264px;text-shadow:0 0 1px #2e2e2e;">Next</span>
</body></html>
